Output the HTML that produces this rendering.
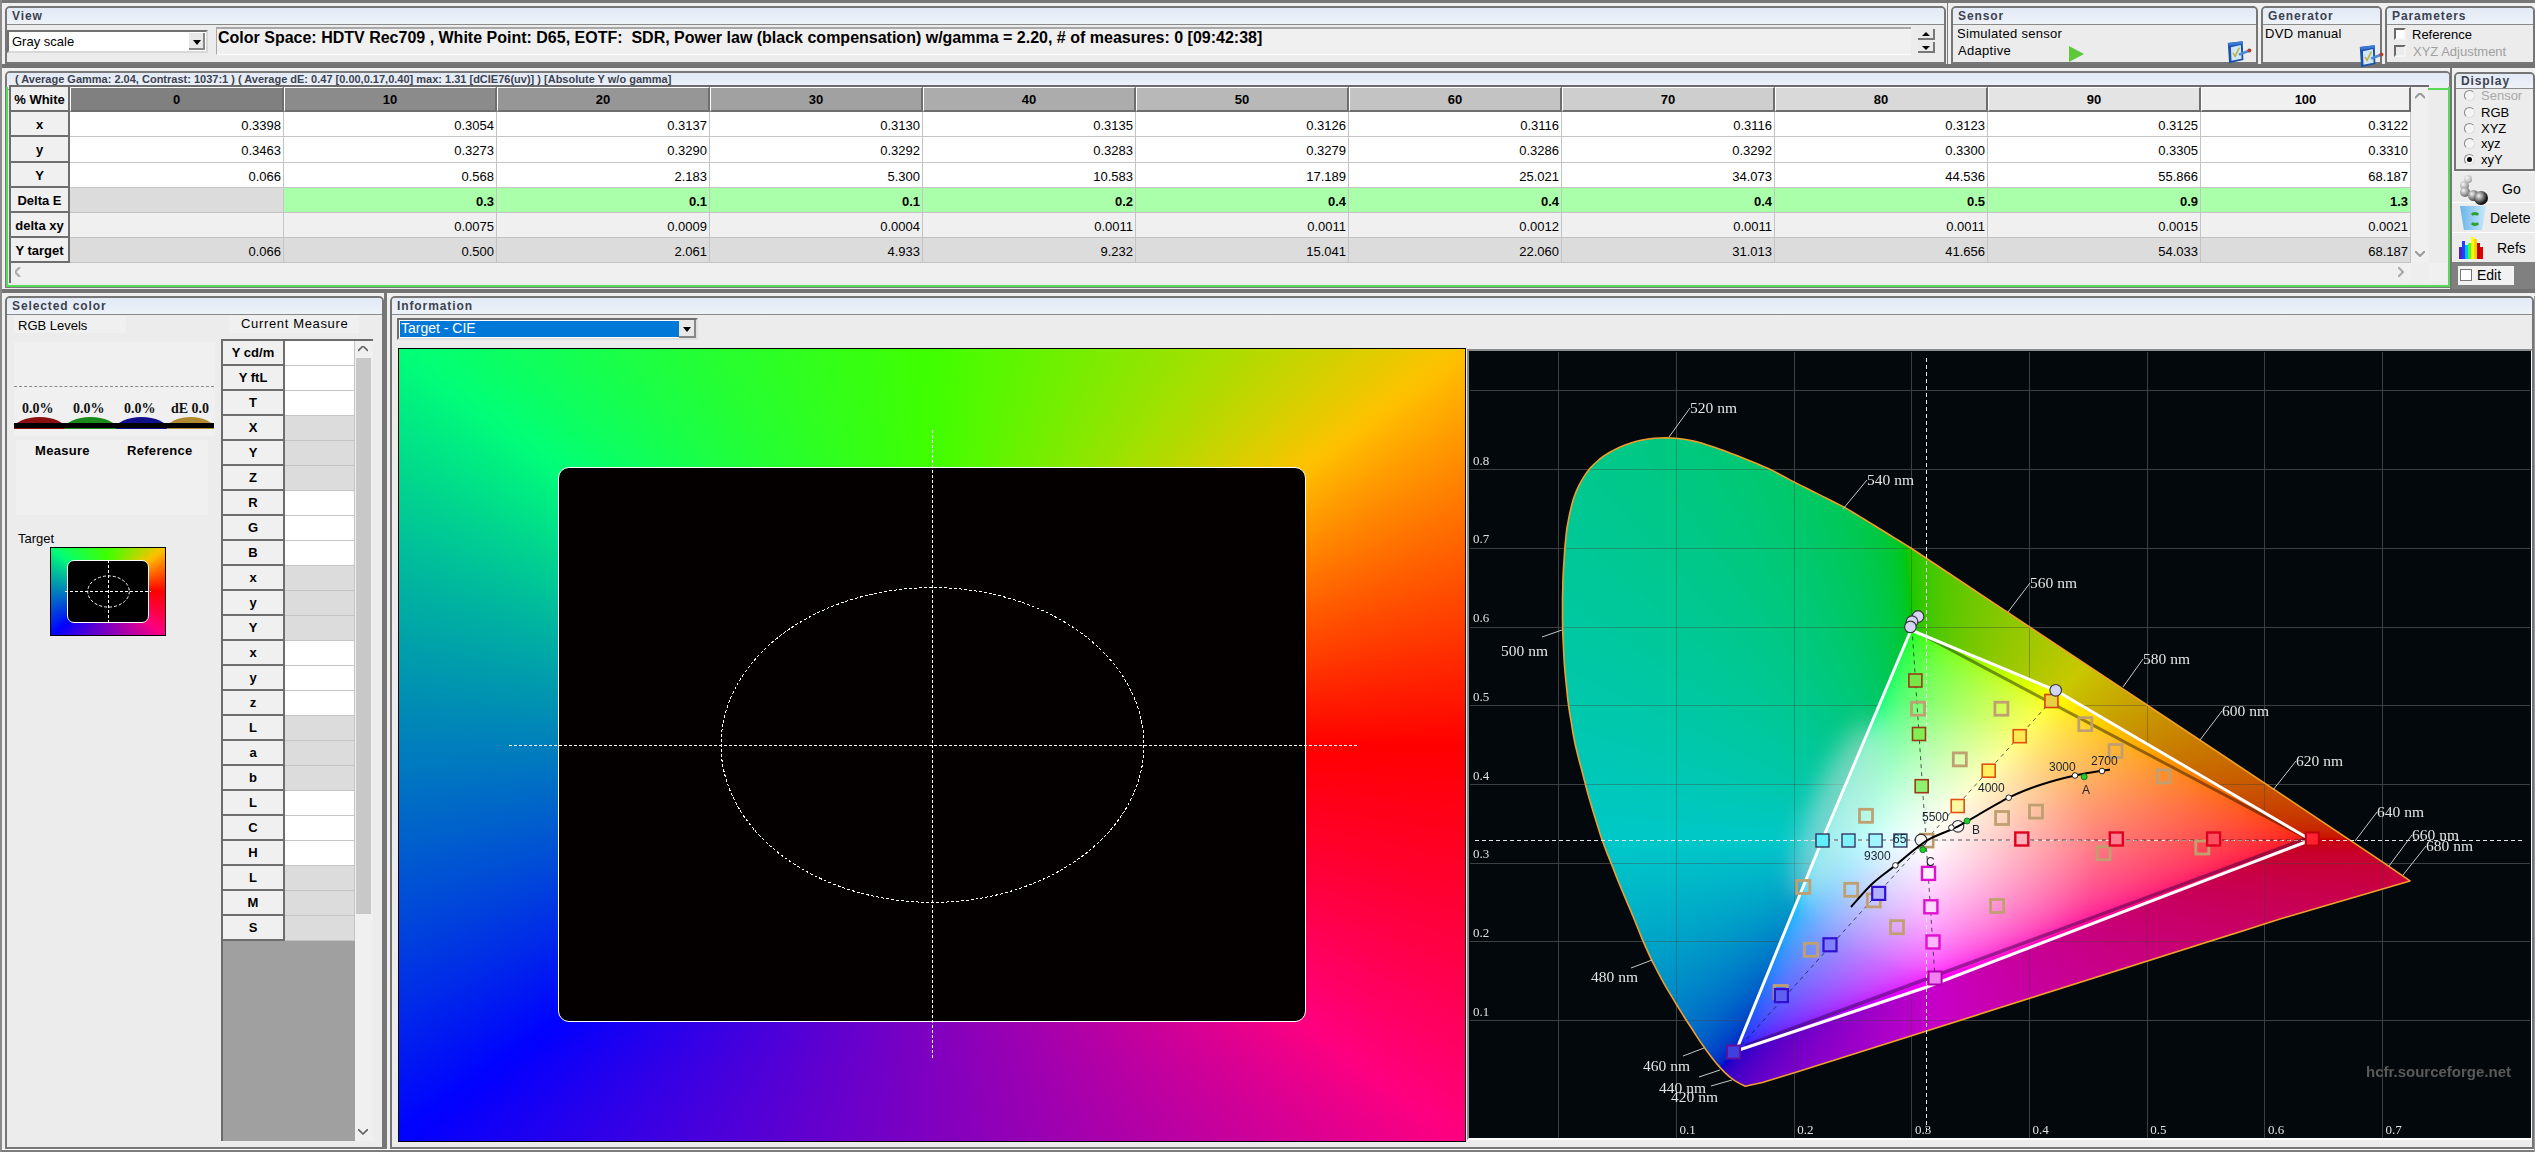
<!DOCTYPE html><html><head><meta charset="utf-8"><style>
*{box-sizing:border-box;margin:0;padding:0}
html,body{width:2535px;height:1152px;overflow:hidden;background:#f0f0f0;font-family:"Liberation Sans", sans-serif;color:#000}
.ab{position:absolute}
.pnl{position:absolute;border:2px solid #767676;border-radius:5px 5px 0 0;background:#ececec;overflow:hidden}
.ttl{position:absolute;left:0;right:0;top:0;height:17px;background:linear-gradient(#e2eaf6,#eef2f9);border-bottom:1px solid #8a8a8a;font-weight:bold;font-size:12px;color:#3c4250;padding-left:5px;line-height:16px;letter-spacing:0.9px}
.t{position:absolute;white-space:nowrap}
</style></head><body>

<div class="ab" style="left:0;top:0;width:2535px;height:3px;background:#767676"></div>
<div class="ab" style="left:0;top:0;width:2px;height:1152px;background:#8a8a8a"></div>
<div class="ab" style="left:2px;top:64px;width:2533px;height:4px;background:#737373"></div>
<div class="ab" style="left:2px;top:289px;width:2533px;height:4px;background:#737373"></div>
<div class="pnl" style="left:5px;top:6px;width:1941px;height:58px;"><div class="ttl">View</div>
<div class="ab" style="left:0px;top:22px;width:201px;height:23px;border:2px solid #707070;border-bottom-color:#d8d8d8;border-right-color:#d8d8d8;background:#fff"></div>
<div class="t" style="left:5px;top:26px;font-size:13px">Gray scale</div>
<div class="ab" style="left:182px;top:25px;width:16px;height:17px;background:#e8e8e8;border-right:2px solid #888;border-bottom:2px solid #888"></div>
<div class="ab" style="left:186px;top:32px;width:0;height:0;border-left:4px solid transparent;border-right:4px solid transparent;border-top:5px solid #000"></div>
<div class="ab" style="left:209px;top:19px;width:1695px;height:28px;border-top:2px solid #a8a8a8;border-left:1px solid #a8a8a8;border-bottom:1px solid #fff;background:#f0f0f0"></div>
<div class="t" style="left:211px;top:21px;font-size:16px;font-weight:bold;letter-spacing:0px;color:#000" id="cs">Color Space: HDTV Rec709 , White Point: D65, EOTF:&nbsp; SDR, Power law (black compensation) w/gamma = 2.20, # of measures: 0 [09:42:38]</div>
<div class="ab" style="left:1911px;top:21px;width:17px;height:11px;background:#eaeaea;border-right:2px solid #777;border-bottom:2px solid #777"></div>
<div class="ab" style="left:1915px;top:24px;width:0;height:0;border-left:4px solid transparent;border-right:4px solid transparent;border-bottom:4px solid #000"></div>
<div class="ab" style="left:1911px;top:34px;width:17px;height:11px;background:#eaeaea;border-right:2px solid #777;border-bottom:2px solid #777"></div>
<div class="ab" style="left:1915px;top:38px;width:0;height:0;border-left:4px solid transparent;border-right:4px solid transparent;border-top:4px solid #000"></div>
</div>
<div class="pnl" style="left:1951px;top:6px;width:307px;height:58px;"><div class="ttl">Sensor</div>
<div class="t" style="left:4px;top:18px;font-size:13px;letter-spacing:0.3px">Simulated sensor</div>
<div class="t" style="left:5px;top:35px;font-size:13px;letter-spacing:0.3px">Adaptive</div>
<div class="ab" style="left:116px;top:38px;width:0;height:0;border-top:8px solid transparent;border-bottom:8px solid transparent;border-left:15px solid #5cc83a"></div>
</div>
<div class="pnl" style="left:2261px;top:6px;width:121px;height:58px;"><div class="ttl">Generator</div>
<div class="t" style="left:2px;top:18px;font-size:13px;letter-spacing:0.3px">DVD manual</div>
</div>
<div class="pnl" style="left:2385px;top:6px;width:150px;height:58px;"><div class="ttl">Parameters</div>
<div class="ab" style="left:7px;top:20px;width:12px;height:12px;border:2px solid #6a6a6a;border-right-color:#f4f4f4;border-bottom-color:#f4f4f4;background:#fff"></div>
<div class="t" style="left:25px;top:19px;font-size:13px">Reference</div>
<div class="ab" style="left:7px;top:37px;width:12px;height:12px;border:2px solid #6a6a6a;border-right-color:#f4f4f4;border-bottom-color:#f4f4f4;background:#ececec"></div>
<div class="t" style="left:26px;top:36px;font-size:13px;color:#a0a0a0">XYZ Adjustment</div>
</div>
<div class="pnl" style="left:5px;top:71px;width:2446px;height:217px;border-color:#7a7a7a;"><div class="ttl"></div>
</div>
<div class="ab" style="left:6px;top:87px;width:2444px;height:200px;border:2px solid #58d858;border-top:none"></div>
<div class="t" style="left:15px;top:73px;font-size:11px;font-weight:bold;color:#3c4250;letter-spacing:0px" id="stat">( Average Gamma: 2.04, Contrast: 1037:1 ) ( Average dE: 0.47 [0.00,0.17,0.40] max: 1.31 [dCIE76(uv)] ) [Absolute Y w/o gamma]</div>
<div class="ab" style="left:9px;top:85px;width:2420px;height:198px;background:#eeeeee;border-top:2px solid #6c6c6c;border-left:2px solid #6c6c6c"></div>
<div class="ab" style="left:11px;top:87px;width:59px;height:25px;background:#f0f0f0;border-bottom:2px solid #6e6e6e;border-right:2px solid #6e6e6e;font-weight:bold;font-size:13px;text-align:center;line-height:25px">% White</div>
<div class="ab" style="left:11px;top:112px;width:59px;height:25px;background:#f0f0f0;border-bottom:2px solid #6e6e6e;border-right:2px solid #6e6e6e;font-weight:bold;font-size:13px;text-align:center;line-height:25px">x</div>
<div class="ab" style="left:11px;top:137px;width:59px;height:26px;background:#f0f0f0;border-bottom:2px solid #6e6e6e;border-right:2px solid #6e6e6e;font-weight:bold;font-size:13px;text-align:center;line-height:26px">y</div>
<div class="ab" style="left:11px;top:163px;width:59px;height:25px;background:#f0f0f0;border-bottom:2px solid #6e6e6e;border-right:2px solid #6e6e6e;font-weight:bold;font-size:13px;text-align:center;line-height:25px">Y</div>
<div class="ab" style="left:11px;top:188px;width:59px;height:25px;background:#f0f0f0;border-bottom:2px solid #6e6e6e;border-right:2px solid #6e6e6e;font-weight:bold;font-size:13px;text-align:center;line-height:25px">Delta E</div>
<div class="ab" style="left:11px;top:213px;width:59px;height:25px;background:#f0f0f0;border-bottom:2px solid #6e6e6e;border-right:2px solid #6e6e6e;font-weight:bold;font-size:13px;text-align:center;line-height:25px">delta xy</div>
<div class="ab" style="left:11px;top:238px;width:59px;height:25px;background:#f0f0f0;border-bottom:2px solid #6e6e6e;border-right:2px solid #6e6e6e;font-weight:bold;font-size:13px;text-align:center;line-height:25px">Y target</div>
<div class="ab" style="left:70px;top:87px;width:214px;height:25px;background:rgb(128,128,128);border-left:1px solid #fff;border-top:1px solid #fff;border-right:2px solid #6e6e6e;border-bottom:2px solid #6e6e6e;font-weight:bold;font-size:13px;text-align:center;line-height:24px">0</div>
<div class="ab" style="left:284px;top:87px;width:213px;height:25px;background:rgb(139,139,139);border-left:1px solid #fff;border-top:1px solid #fff;border-right:2px solid #6e6e6e;border-bottom:2px solid #6e6e6e;font-weight:bold;font-size:13px;text-align:center;line-height:24px">10</div>
<div class="ab" style="left:497px;top:87px;width:213px;height:25px;background:rgb(150,150,150);border-left:1px solid #fff;border-top:1px solid #fff;border-right:2px solid #6e6e6e;border-bottom:2px solid #6e6e6e;font-weight:bold;font-size:13px;text-align:center;line-height:24px">20</div>
<div class="ab" style="left:710px;top:87px;width:213px;height:25px;background:rgb(161,161,161);border-left:1px solid #fff;border-top:1px solid #fff;border-right:2px solid #6e6e6e;border-bottom:2px solid #6e6e6e;font-weight:bold;font-size:13px;text-align:center;line-height:24px">30</div>
<div class="ab" style="left:923px;top:87px;width:213px;height:25px;background:rgb(172,172,172);border-left:1px solid #fff;border-top:1px solid #fff;border-right:2px solid #6e6e6e;border-bottom:2px solid #6e6e6e;font-weight:bold;font-size:13px;text-align:center;line-height:24px">40</div>
<div class="ab" style="left:1136px;top:87px;width:213px;height:25px;background:rgb(184,184,184);border-left:1px solid #fff;border-top:1px solid #fff;border-right:2px solid #6e6e6e;border-bottom:2px solid #6e6e6e;font-weight:bold;font-size:13px;text-align:center;line-height:24px">50</div>
<div class="ab" style="left:1349px;top:87px;width:213px;height:25px;background:rgb(195,195,195);border-left:1px solid #fff;border-top:1px solid #fff;border-right:2px solid #6e6e6e;border-bottom:2px solid #6e6e6e;font-weight:bold;font-size:13px;text-align:center;line-height:24px">60</div>
<div class="ab" style="left:1562px;top:87px;width:213px;height:25px;background:rgb(206,206,206);border-left:1px solid #fff;border-top:1px solid #fff;border-right:2px solid #6e6e6e;border-bottom:2px solid #6e6e6e;font-weight:bold;font-size:13px;text-align:center;line-height:24px">70</div>
<div class="ab" style="left:1775px;top:87px;width:213px;height:25px;background:rgb(217,217,217);border-left:1px solid #fff;border-top:1px solid #fff;border-right:2px solid #6e6e6e;border-bottom:2px solid #6e6e6e;font-weight:bold;font-size:13px;text-align:center;line-height:24px">80</div>
<div class="ab" style="left:1988px;top:87px;width:213px;height:25px;background:rgb(228,228,228);border-left:1px solid #fff;border-top:1px solid #fff;border-right:2px solid #6e6e6e;border-bottom:2px solid #6e6e6e;font-weight:bold;font-size:13px;text-align:center;line-height:24px">90</div>
<div class="ab" style="left:2201px;top:87px;width:210px;height:25px;background:rgb(240,240,240);border-left:1px solid #fff;border-top:1px solid #fff;border-right:2px solid #6e6e6e;border-bottom:2px solid #6e6e6e;font-weight:bold;font-size:13px;text-align:center;line-height:24px">100</div>
<div class="ab" style="left:70px;top:112px;width:214px;height:25px;background:#ffffff;border-right:1px solid #c4c4c4;border-bottom:1px solid #c4c4c4;font-size:13px;font-weight:normal;text-align:right;padding-right:2px;line-height:27px">0.3398</div>
<div class="ab" style="left:284px;top:112px;width:213px;height:25px;background:#ffffff;border-right:1px solid #c4c4c4;border-bottom:1px solid #c4c4c4;font-size:13px;font-weight:normal;text-align:right;padding-right:2px;line-height:27px">0.3054</div>
<div class="ab" style="left:497px;top:112px;width:213px;height:25px;background:#ffffff;border-right:1px solid #c4c4c4;border-bottom:1px solid #c4c4c4;font-size:13px;font-weight:normal;text-align:right;padding-right:2px;line-height:27px">0.3137</div>
<div class="ab" style="left:710px;top:112px;width:213px;height:25px;background:#ffffff;border-right:1px solid #c4c4c4;border-bottom:1px solid #c4c4c4;font-size:13px;font-weight:normal;text-align:right;padding-right:2px;line-height:27px">0.3130</div>
<div class="ab" style="left:923px;top:112px;width:213px;height:25px;background:#ffffff;border-right:1px solid #c4c4c4;border-bottom:1px solid #c4c4c4;font-size:13px;font-weight:normal;text-align:right;padding-right:2px;line-height:27px">0.3135</div>
<div class="ab" style="left:1136px;top:112px;width:213px;height:25px;background:#ffffff;border-right:1px solid #c4c4c4;border-bottom:1px solid #c4c4c4;font-size:13px;font-weight:normal;text-align:right;padding-right:2px;line-height:27px">0.3126</div>
<div class="ab" style="left:1349px;top:112px;width:213px;height:25px;background:#ffffff;border-right:1px solid #c4c4c4;border-bottom:1px solid #c4c4c4;font-size:13px;font-weight:normal;text-align:right;padding-right:2px;line-height:27px">0.3116</div>
<div class="ab" style="left:1562px;top:112px;width:213px;height:25px;background:#ffffff;border-right:1px solid #c4c4c4;border-bottom:1px solid #c4c4c4;font-size:13px;font-weight:normal;text-align:right;padding-right:2px;line-height:27px">0.3116</div>
<div class="ab" style="left:1775px;top:112px;width:213px;height:25px;background:#ffffff;border-right:1px solid #c4c4c4;border-bottom:1px solid #c4c4c4;font-size:13px;font-weight:normal;text-align:right;padding-right:2px;line-height:27px">0.3123</div>
<div class="ab" style="left:1988px;top:112px;width:213px;height:25px;background:#ffffff;border-right:1px solid #c4c4c4;border-bottom:1px solid #c4c4c4;font-size:13px;font-weight:normal;text-align:right;padding-right:2px;line-height:27px">0.3125</div>
<div class="ab" style="left:2201px;top:112px;width:210px;height:25px;background:#ffffff;border-right:1px solid #c4c4c4;border-bottom:1px solid #c4c4c4;font-size:13px;font-weight:normal;text-align:right;padding-right:2px;line-height:27px">0.3122</div>
<div class="ab" style="left:70px;top:137px;width:214px;height:26px;background:#ffffff;border-right:1px solid #c4c4c4;border-bottom:1px solid #c4c4c4;font-size:13px;font-weight:normal;text-align:right;padding-right:2px;line-height:28px">0.3463</div>
<div class="ab" style="left:284px;top:137px;width:213px;height:26px;background:#ffffff;border-right:1px solid #c4c4c4;border-bottom:1px solid #c4c4c4;font-size:13px;font-weight:normal;text-align:right;padding-right:2px;line-height:28px">0.3273</div>
<div class="ab" style="left:497px;top:137px;width:213px;height:26px;background:#ffffff;border-right:1px solid #c4c4c4;border-bottom:1px solid #c4c4c4;font-size:13px;font-weight:normal;text-align:right;padding-right:2px;line-height:28px">0.3290</div>
<div class="ab" style="left:710px;top:137px;width:213px;height:26px;background:#ffffff;border-right:1px solid #c4c4c4;border-bottom:1px solid #c4c4c4;font-size:13px;font-weight:normal;text-align:right;padding-right:2px;line-height:28px">0.3292</div>
<div class="ab" style="left:923px;top:137px;width:213px;height:26px;background:#ffffff;border-right:1px solid #c4c4c4;border-bottom:1px solid #c4c4c4;font-size:13px;font-weight:normal;text-align:right;padding-right:2px;line-height:28px">0.3283</div>
<div class="ab" style="left:1136px;top:137px;width:213px;height:26px;background:#ffffff;border-right:1px solid #c4c4c4;border-bottom:1px solid #c4c4c4;font-size:13px;font-weight:normal;text-align:right;padding-right:2px;line-height:28px">0.3279</div>
<div class="ab" style="left:1349px;top:137px;width:213px;height:26px;background:#ffffff;border-right:1px solid #c4c4c4;border-bottom:1px solid #c4c4c4;font-size:13px;font-weight:normal;text-align:right;padding-right:2px;line-height:28px">0.3286</div>
<div class="ab" style="left:1562px;top:137px;width:213px;height:26px;background:#ffffff;border-right:1px solid #c4c4c4;border-bottom:1px solid #c4c4c4;font-size:13px;font-weight:normal;text-align:right;padding-right:2px;line-height:28px">0.3292</div>
<div class="ab" style="left:1775px;top:137px;width:213px;height:26px;background:#ffffff;border-right:1px solid #c4c4c4;border-bottom:1px solid #c4c4c4;font-size:13px;font-weight:normal;text-align:right;padding-right:2px;line-height:28px">0.3300</div>
<div class="ab" style="left:1988px;top:137px;width:213px;height:26px;background:#ffffff;border-right:1px solid #c4c4c4;border-bottom:1px solid #c4c4c4;font-size:13px;font-weight:normal;text-align:right;padding-right:2px;line-height:28px">0.3305</div>
<div class="ab" style="left:2201px;top:137px;width:210px;height:26px;background:#ffffff;border-right:1px solid #c4c4c4;border-bottom:1px solid #c4c4c4;font-size:13px;font-weight:normal;text-align:right;padding-right:2px;line-height:28px">0.3310</div>
<div class="ab" style="left:70px;top:163px;width:214px;height:25px;background:#ffffff;border-right:1px solid #c4c4c4;border-bottom:1px solid #c4c4c4;font-size:13px;font-weight:normal;text-align:right;padding-right:2px;line-height:27px">0.066</div>
<div class="ab" style="left:284px;top:163px;width:213px;height:25px;background:#ffffff;border-right:1px solid #c4c4c4;border-bottom:1px solid #c4c4c4;font-size:13px;font-weight:normal;text-align:right;padding-right:2px;line-height:27px">0.568</div>
<div class="ab" style="left:497px;top:163px;width:213px;height:25px;background:#ffffff;border-right:1px solid #c4c4c4;border-bottom:1px solid #c4c4c4;font-size:13px;font-weight:normal;text-align:right;padding-right:2px;line-height:27px">2.183</div>
<div class="ab" style="left:710px;top:163px;width:213px;height:25px;background:#ffffff;border-right:1px solid #c4c4c4;border-bottom:1px solid #c4c4c4;font-size:13px;font-weight:normal;text-align:right;padding-right:2px;line-height:27px">5.300</div>
<div class="ab" style="left:923px;top:163px;width:213px;height:25px;background:#ffffff;border-right:1px solid #c4c4c4;border-bottom:1px solid #c4c4c4;font-size:13px;font-weight:normal;text-align:right;padding-right:2px;line-height:27px">10.583</div>
<div class="ab" style="left:1136px;top:163px;width:213px;height:25px;background:#ffffff;border-right:1px solid #c4c4c4;border-bottom:1px solid #c4c4c4;font-size:13px;font-weight:normal;text-align:right;padding-right:2px;line-height:27px">17.189</div>
<div class="ab" style="left:1349px;top:163px;width:213px;height:25px;background:#ffffff;border-right:1px solid #c4c4c4;border-bottom:1px solid #c4c4c4;font-size:13px;font-weight:normal;text-align:right;padding-right:2px;line-height:27px">25.021</div>
<div class="ab" style="left:1562px;top:163px;width:213px;height:25px;background:#ffffff;border-right:1px solid #c4c4c4;border-bottom:1px solid #c4c4c4;font-size:13px;font-weight:normal;text-align:right;padding-right:2px;line-height:27px">34.073</div>
<div class="ab" style="left:1775px;top:163px;width:213px;height:25px;background:#ffffff;border-right:1px solid #c4c4c4;border-bottom:1px solid #c4c4c4;font-size:13px;font-weight:normal;text-align:right;padding-right:2px;line-height:27px">44.536</div>
<div class="ab" style="left:1988px;top:163px;width:213px;height:25px;background:#ffffff;border-right:1px solid #c4c4c4;border-bottom:1px solid #c4c4c4;font-size:13px;font-weight:normal;text-align:right;padding-right:2px;line-height:27px">55.866</div>
<div class="ab" style="left:2201px;top:163px;width:210px;height:25px;background:#ffffff;border-right:1px solid #c4c4c4;border-bottom:1px solid #c4c4c4;font-size:13px;font-weight:normal;text-align:right;padding-right:2px;line-height:27px">68.187</div>
<div class="ab" style="left:70px;top:188px;width:214px;height:25px;background:#dcdcdc;border-right:1px solid #c4c4c4;border-bottom:1px solid #c4c4c4;font-size:13px;font-weight:bold;text-align:right;padding-right:2px;line-height:27px"></div>
<div class="ab" style="left:284px;top:188px;width:213px;height:25px;background:#aaffaa;border-right:1px solid #c4c4c4;border-bottom:1px solid #c4c4c4;font-size:13px;font-weight:bold;text-align:right;padding-right:2px;line-height:27px">0.3</div>
<div class="ab" style="left:497px;top:188px;width:213px;height:25px;background:#aaffaa;border-right:1px solid #c4c4c4;border-bottom:1px solid #c4c4c4;font-size:13px;font-weight:bold;text-align:right;padding-right:2px;line-height:27px">0.1</div>
<div class="ab" style="left:710px;top:188px;width:213px;height:25px;background:#aaffaa;border-right:1px solid #c4c4c4;border-bottom:1px solid #c4c4c4;font-size:13px;font-weight:bold;text-align:right;padding-right:2px;line-height:27px">0.1</div>
<div class="ab" style="left:923px;top:188px;width:213px;height:25px;background:#aaffaa;border-right:1px solid #c4c4c4;border-bottom:1px solid #c4c4c4;font-size:13px;font-weight:bold;text-align:right;padding-right:2px;line-height:27px">0.2</div>
<div class="ab" style="left:1136px;top:188px;width:213px;height:25px;background:#aaffaa;border-right:1px solid #c4c4c4;border-bottom:1px solid #c4c4c4;font-size:13px;font-weight:bold;text-align:right;padding-right:2px;line-height:27px">0.4</div>
<div class="ab" style="left:1349px;top:188px;width:213px;height:25px;background:#aaffaa;border-right:1px solid #c4c4c4;border-bottom:1px solid #c4c4c4;font-size:13px;font-weight:bold;text-align:right;padding-right:2px;line-height:27px">0.4</div>
<div class="ab" style="left:1562px;top:188px;width:213px;height:25px;background:#aaffaa;border-right:1px solid #c4c4c4;border-bottom:1px solid #c4c4c4;font-size:13px;font-weight:bold;text-align:right;padding-right:2px;line-height:27px">0.4</div>
<div class="ab" style="left:1775px;top:188px;width:213px;height:25px;background:#aaffaa;border-right:1px solid #c4c4c4;border-bottom:1px solid #c4c4c4;font-size:13px;font-weight:bold;text-align:right;padding-right:2px;line-height:27px">0.5</div>
<div class="ab" style="left:1988px;top:188px;width:213px;height:25px;background:#aaffaa;border-right:1px solid #c4c4c4;border-bottom:1px solid #c4c4c4;font-size:13px;font-weight:bold;text-align:right;padding-right:2px;line-height:27px">0.9</div>
<div class="ab" style="left:2201px;top:188px;width:210px;height:25px;background:#aaffaa;border-right:1px solid #c4c4c4;border-bottom:1px solid #c4c4c4;font-size:13px;font-weight:bold;text-align:right;padding-right:2px;line-height:27px">1.3</div>
<div class="ab" style="left:70px;top:213px;width:214px;height:25px;background:#f0f0f0;border-right:1px solid #c4c4c4;border-bottom:1px solid #c4c4c4;font-size:13px;font-weight:normal;text-align:right;padding-right:2px;line-height:27px"></div>
<div class="ab" style="left:284px;top:213px;width:213px;height:25px;background:#f0f0f0;border-right:1px solid #c4c4c4;border-bottom:1px solid #c4c4c4;font-size:13px;font-weight:normal;text-align:right;padding-right:2px;line-height:27px">0.0075</div>
<div class="ab" style="left:497px;top:213px;width:213px;height:25px;background:#f0f0f0;border-right:1px solid #c4c4c4;border-bottom:1px solid #c4c4c4;font-size:13px;font-weight:normal;text-align:right;padding-right:2px;line-height:27px">0.0009</div>
<div class="ab" style="left:710px;top:213px;width:213px;height:25px;background:#f0f0f0;border-right:1px solid #c4c4c4;border-bottom:1px solid #c4c4c4;font-size:13px;font-weight:normal;text-align:right;padding-right:2px;line-height:27px">0.0004</div>
<div class="ab" style="left:923px;top:213px;width:213px;height:25px;background:#f0f0f0;border-right:1px solid #c4c4c4;border-bottom:1px solid #c4c4c4;font-size:13px;font-weight:normal;text-align:right;padding-right:2px;line-height:27px">0.0011</div>
<div class="ab" style="left:1136px;top:213px;width:213px;height:25px;background:#f0f0f0;border-right:1px solid #c4c4c4;border-bottom:1px solid #c4c4c4;font-size:13px;font-weight:normal;text-align:right;padding-right:2px;line-height:27px">0.0011</div>
<div class="ab" style="left:1349px;top:213px;width:213px;height:25px;background:#f0f0f0;border-right:1px solid #c4c4c4;border-bottom:1px solid #c4c4c4;font-size:13px;font-weight:normal;text-align:right;padding-right:2px;line-height:27px">0.0012</div>
<div class="ab" style="left:1562px;top:213px;width:213px;height:25px;background:#f0f0f0;border-right:1px solid #c4c4c4;border-bottom:1px solid #c4c4c4;font-size:13px;font-weight:normal;text-align:right;padding-right:2px;line-height:27px">0.0011</div>
<div class="ab" style="left:1775px;top:213px;width:213px;height:25px;background:#f0f0f0;border-right:1px solid #c4c4c4;border-bottom:1px solid #c4c4c4;font-size:13px;font-weight:normal;text-align:right;padding-right:2px;line-height:27px">0.0011</div>
<div class="ab" style="left:1988px;top:213px;width:213px;height:25px;background:#f0f0f0;border-right:1px solid #c4c4c4;border-bottom:1px solid #c4c4c4;font-size:13px;font-weight:normal;text-align:right;padding-right:2px;line-height:27px">0.0015</div>
<div class="ab" style="left:2201px;top:213px;width:210px;height:25px;background:#f0f0f0;border-right:1px solid #c4c4c4;border-bottom:1px solid #c4c4c4;font-size:13px;font-weight:normal;text-align:right;padding-right:2px;line-height:27px">0.0021</div>
<div class="ab" style="left:70px;top:238px;width:214px;height:25px;background:#dcdcdc;border-right:1px solid #c4c4c4;border-bottom:1px solid #c4c4c4;font-size:13px;font-weight:normal;text-align:right;padding-right:2px;line-height:27px">0.066</div>
<div class="ab" style="left:284px;top:238px;width:213px;height:25px;background:#dcdcdc;border-right:1px solid #c4c4c4;border-bottom:1px solid #c4c4c4;font-size:13px;font-weight:normal;text-align:right;padding-right:2px;line-height:27px">0.500</div>
<div class="ab" style="left:497px;top:238px;width:213px;height:25px;background:#dcdcdc;border-right:1px solid #c4c4c4;border-bottom:1px solid #c4c4c4;font-size:13px;font-weight:normal;text-align:right;padding-right:2px;line-height:27px">2.061</div>
<div class="ab" style="left:710px;top:238px;width:213px;height:25px;background:#dcdcdc;border-right:1px solid #c4c4c4;border-bottom:1px solid #c4c4c4;font-size:13px;font-weight:normal;text-align:right;padding-right:2px;line-height:27px">4.933</div>
<div class="ab" style="left:923px;top:238px;width:213px;height:25px;background:#dcdcdc;border-right:1px solid #c4c4c4;border-bottom:1px solid #c4c4c4;font-size:13px;font-weight:normal;text-align:right;padding-right:2px;line-height:27px">9.232</div>
<div class="ab" style="left:1136px;top:238px;width:213px;height:25px;background:#dcdcdc;border-right:1px solid #c4c4c4;border-bottom:1px solid #c4c4c4;font-size:13px;font-weight:normal;text-align:right;padding-right:2px;line-height:27px">15.041</div>
<div class="ab" style="left:1349px;top:238px;width:213px;height:25px;background:#dcdcdc;border-right:1px solid #c4c4c4;border-bottom:1px solid #c4c4c4;font-size:13px;font-weight:normal;text-align:right;padding-right:2px;line-height:27px">22.060</div>
<div class="ab" style="left:1562px;top:238px;width:213px;height:25px;background:#dcdcdc;border-right:1px solid #c4c4c4;border-bottom:1px solid #c4c4c4;font-size:13px;font-weight:normal;text-align:right;padding-right:2px;line-height:27px">31.013</div>
<div class="ab" style="left:1775px;top:238px;width:213px;height:25px;background:#dcdcdc;border-right:1px solid #c4c4c4;border-bottom:1px solid #c4c4c4;font-size:13px;font-weight:normal;text-align:right;padding-right:2px;line-height:27px">41.656</div>
<div class="ab" style="left:1988px;top:238px;width:213px;height:25px;background:#dcdcdc;border-right:1px solid #c4c4c4;border-bottom:1px solid #c4c4c4;font-size:13px;font-weight:normal;text-align:right;padding-right:2px;line-height:27px">54.033</div>
<div class="ab" style="left:2201px;top:238px;width:210px;height:25px;background:#dcdcdc;border-right:1px solid #c4c4c4;border-bottom:1px solid #c4c4c4;font-size:13px;font-weight:normal;text-align:right;padding-right:2px;line-height:27px">68.187</div>
<div class="ab" style="left:2411px;top:87px;width:18px;height:176px;background:#f0f0f0"></div>
<div class="ab" style="left:11px;top:263px;width:2400px;height:19px;background:#f0f0f0"></div>
<div class="ab" style="left:2429px;top:263px;width:18px;height:19px;background:#f0f0f0"></div>
<div class="ab" style="left:2450px;top:68px;width:2px;height:221px;background:#777"></div>
<div class="pnl" style="left:2454px;top:72px;width:81px;height:99px;"><div class="ttl" style="height:15px;line-height:14px">Display</div>
<div class="ab" style="left:8px;top:16px;width:11px;height:11px;border-radius:50%;border:1px solid #888;border-right-color:#ddd;border-bottom-color:#ddd;background:#f4f4f4"></div>
<div class="t" style="left:25px;top:14px;font-size:13px;color:#a8a8a8">Sensor</div>
<div class="ab" style="left:8px;top:33px;width:11px;height:11px;border-radius:50%;border:1px solid #888;border-right-color:#ddd;border-bottom-color:#ddd;background:#f4f4f4"></div>
<div class="t" style="left:25px;top:31px;font-size:13px;color:#000">RGB</div>
<div class="ab" style="left:8px;top:49px;width:11px;height:11px;border-radius:50%;border:1px solid #888;border-right-color:#ddd;border-bottom-color:#ddd;background:#f4f4f4"></div>
<div class="t" style="left:25px;top:47px;font-size:13px;color:#000">XYZ</div>
<div class="ab" style="left:8px;top:64px;width:11px;height:11px;border-radius:50%;border:1px solid #888;border-right-color:#ddd;border-bottom-color:#ddd;background:#f4f4f4"></div>
<div class="t" style="left:25px;top:62px;font-size:13px;color:#000">xyz</div>
<div class="ab" style="left:8px;top:80px;width:11px;height:11px;border-radius:50%;border:1px solid #888;border-right-color:#ddd;border-bottom-color:#ddd;background:#f4f4f4"></div>
<div class="ab" style="left:11px;top:83px;width:5px;height:5px;border-radius:50%;background:#000"></div>
<div class="t" style="left:25px;top:78px;font-size:13px;color:#000">xyY</div>
</div>
<div class="ab" style="left:2452px;top:173px;width:83px;height:89px;background:#ececec"></div>
<div class="ab" style="left:2452px;top:202px;width:83px;height:1px;background:#fff"></div>
<div class="ab" style="left:2452px;top:232px;width:83px;height:1px;background:#fff"></div>
<div class="t" style="left:2502px;top:181px;font-size:14px">Go</div>
<div class="t" style="left:2490px;top:210px;font-size:14px">Delete</div>
<div class="t" style="left:2497px;top:240px;font-size:14px">Refs</div>
<div class="ab" style="left:2464px;top:175px;width:8px;height:8px;border-radius:50%;background:radial-gradient(circle at 35% 35%,#f4f4f4 0%,#bbb 65%,#222 100%)"></div>
<div class="ab" style="left:2459.5px;top:180.5px;width:9.0px;height:9.0px;border-radius:50%;background:radial-gradient(circle at 35% 35%,#f4f4f4 0%,#999 65%,#222 100%)"></div>
<div class="ab" style="left:2460px;top:187px;width:10px;height:10px;border-radius:50%;background:radial-gradient(circle at 35% 35%,#f4f4f4 0%,#777 65%,#222 100%)"></div>
<div class="ab" style="left:2467.5px;top:189.5px;width:11.0px;height:11.0px;border-radius:50%;background:radial-gradient(circle at 35% 35%,#f4f4f4 0%,#555 65%,#222 100%)"></div>
<div class="ab" style="left:2474px;top:191px;width:14px;height:14px;border-radius:50%;background:radial-gradient(circle at 35% 35%,#f4f4f4 0%,#111 65%,#222 100%)"></div>
<div class="ab" style="left:2460px;top:206px;width:26px;height:24px;background:linear-gradient(90deg,#6ab4e8,#c8e8fb);clip-path:polygon(0 0,100% 0,85% 100%,15% 100%)"></div>
<div class="ab" style="left:2469px;top:212px;width:12px;height:14px;border-radius:50%;border:3px solid #2aa02a;border-left-color:transparent;border-right-color:transparent"></div>
<div class="ab" style="left:2459px;top:247px;width:3px;height:12px;background:#5020c0"></div>
<div class="ab" style="left:2462px;top:241px;width:3px;height:18px;background:#2040ff"></div>
<div class="ab" style="left:2465px;top:245px;width:3px;height:14px;background:#00c0ff"></div>
<div class="ab" style="left:2468px;top:243px;width:3px;height:16px;background:#40ff40"></div>
<div class="ab" style="left:2471px;top:237px;width:3px;height:22px;background:#ffff00"></div>
<div class="ab" style="left:2474px;top:239px;width:3px;height:20px;background:#ffd000"></div>
<div class="ab" style="left:2477px;top:243px;width:3px;height:16px;background:#c00000"></div>
<div class="ab" style="left:2480px;top:247px;width:3px;height:12px;background:#e00000"></div>
<div class="ab" style="left:2452px;top:262px;width:83px;height:27px;background:#808080"></div>
<div class="ab" style="left:2458px;top:266px;width:56px;height:19px;background:#f2f2f2"></div>
<div class="ab" style="left:2460px;top:269px;width:12px;height:12px;background:#fff;border:1px solid #777"></div>
<div class="t" style="left:2477px;top:267px;font-size:14px">Edit</div>
<div class="ab" style="left:384px;top:292px;width:3px;height:860px;background:#777"></div>
<div class="pnl" style="left:5px;top:296px;width:379px;height:853px;"><div class="ttl">Selected color</div>
<div class="ab" style="left:7px;top:18px;width:112px;height:17px;background:#f0f0f0"></div>
<div class="t" style="left:11px;top:20px;font-size:13px">RGB Levels</div>
<div class="ab" style="left:222px;top:18px;width:130px;height:17px;background:#f0f0f0"></div>
<div class="t" style="left:234px;top:18px;font-size:13px;letter-spacing:0.65px">Current Measure</div>
<div class="ab" style="left:7px;top:44px;width:201px;height:94px;background:#f0f0f0"></div>
<div class="ab" style="left:7px;top:88px;width:200px;height:0;border-top:1px dashed #8a8a8a"></div>
<div class="t" style="left:15px;top:103px;font-size:14px;font-family:'Liberation Serif',serif;font-weight:bold;color:#111">0.0%</div>
<div class="t" style="left:66px;top:103px;font-size:14px;font-family:'Liberation Serif',serif;font-weight:bold;color:#111">0.0%</div>
<div class="t" style="left:117px;top:103px;font-size:14px;font-family:'Liberation Serif',serif;font-weight:bold;color:#111">0.0%</div>
<div class="t" style="left:164px;top:103px;font-size:14px;font-family:'Liberation Serif',serif;font-weight:bold;color:#111">dE 0.0</div>
<div class="ab" style="left:7px;top:125px;width:200px;height:5px;background:#000"></div>
<div class="ab" style="left:7px;top:119px;width:51px;height:12px;background:#8a1010;border-radius:50% 50% 0 0/100% 100% 0 0"></div>
<div class="ab" style="left:58px;top:119px;width:51px;height:12px;background:#1a8a1a;border-radius:50% 50% 0 0/100% 100% 0 0"></div>
<div class="ab" style="left:109px;top:119px;width:51px;height:12px;background:#10108a;border-radius:50% 50% 0 0/100% 100% 0 0"></div>
<div class="ab" style="left:160px;top:119px;width:47px;height:12px;background:#b08a30;border-radius:50% 50% 0 0/100% 100% 0 0"></div>
<div class="ab" style="left:7px;top:125px;width:200px;height:5px;background:#000"></div>
<div class="ab" style="left:9px;top:142px;width:192px;height:75px;background:#f0f0f0"></div>
<div class="t" style="left:28px;top:145px;font-size:13px;font-weight:bold;letter-spacing:0.3px">Measure</div>
<div class="t" style="left:120px;top:145px;font-size:13px;font-weight:bold;letter-spacing:0.3px">Reference</div>
<div class="t" style="left:11px;top:233px;font-size:13px">Target</div>
<div class="ab" style="left:43px;top:249px;width:116px;height:89px;border:1px solid #000;background:conic-gradient(from 0deg at 57.0px 43.5px,rgb(64,255,0) 0.0deg,rgb(72,253,0) 3.0deg,rgb(79,250,0) 6.0deg,rgb(87,248,0) 9.0deg,rgb(95,245,0) 12.0deg,rgb(103,243,0) 15.0deg,rgb(111,240,0) 18.0deg,rgb(120,237,0) 21.0deg,rgb(129,234,0) 24.0deg,rgb(138,231,0) 27.0deg,rgb(148,228,0) 30.0deg,rgb(159,225,0) 33.0deg,rgb(170,221,0) 36.0deg,rgb(182,217,0) 39.0deg,rgb(195,213,0) 42.0deg,rgb(210,208,0) 45.0deg,rgb(226,203,0) 48.0deg,rgb(244,198,0) 51.0deg,rgb(255,185,0) 54.0deg,rgb(255,165,0) 57.0deg,rgb(255,147,0) 60.0deg,rgb(255,130,0) 63.0deg,rgb(255,113,0) 66.0deg,rgb(255,98,0) 69.0deg,rgb(255,83,0) 72.0deg,rgb(255,68,0) 75.0deg,rgb(255,54,0) 78.0deg,rgb(255,40,0) 81.0deg,rgb(255,27,0) 84.0deg,rgb(255,13,0) 87.0deg,rgb(255,0,0) 90.0deg,rgb(255,0,9) 93.0deg,rgb(255,0,18) 96.0deg,rgb(255,0,27) 99.0deg,rgb(255,0,36) 102.0deg,rgb(255,0,45) 105.0deg,rgb(255,0,54) 108.0deg,rgb(255,0,64) 111.0deg,rgb(255,0,75) 114.0deg,rgb(255,0,85) 117.0deg,rgb(255,0,97) 120.0deg,rgb(255,0,109) 123.0deg,rgb(255,0,122) 126.0deg,rgb(248,0,132) 129.0deg,rgb(236,0,138) 132.0deg,rgb(225,0,143) 135.0deg,rgb(215,0,148) 138.0deg,rgb(206,0,152) 141.0deg,rgb(198,0,156) 144.0deg,rgb(191,0,160) 147.0deg,rgb(184,0,164) 150.0deg,rgb(177,0,167) 153.0deg,rgb(171,0,170) 156.0deg,rgb(165,0,173) 159.0deg,rgb(159,0,176) 162.0deg,rgb(154,0,179) 165.0deg,rgb(148,0,181) 168.0deg,rgb(143,0,184) 171.0deg,rgb(138,0,186) 174.0deg,rgb(133,0,189) 177.0deg,rgb(128,0,192) 180.0deg,rgb(122,0,194) 183.0deg,rgb(117,0,197) 186.0deg,rgb(112,0,199) 189.0deg,rgb(107,0,202) 192.0deg,rgb(101,0,204) 195.0deg,rgb(96,0,207) 198.0deg,rgb(90,0,210) 201.0deg,rgb(84,0,213) 204.0deg,rgb(78,0,216) 207.0deg,rgb(71,0,219) 210.0deg,rgb(64,0,223) 213.0deg,rgb(57,0,227) 216.0deg,rgb(49,0,231) 219.0deg,rgb(40,0,235) 222.0deg,rgb(30,0,240) 225.0deg,rgb(19,0,245) 228.0deg,rgb(7,0,251) 231.0deg,rgb(0,6,252) 234.0deg,rgb(0,19,245) 237.0deg,rgb(0,31,239) 240.0deg,rgb(0,42,233) 243.0deg,rgb(0,53,227) 246.0deg,rgb(0,63,221) 249.0deg,rgb(0,73,216) 252.0deg,rgb(0,83,211) 255.0deg,rgb(0,92,206) 258.0deg,rgb(0,101,202) 261.0deg,rgb(0,110,197) 264.0deg,rgb(0,119,192) 267.0deg,rgb(0,127,188) 270.0deg,rgb(0,136,183) 273.0deg,rgb(0,145,178) 276.0deg,rgb(0,154,173) 279.0deg,rgb(0,163,169) 282.0deg,rgb(0,172,164) 285.0deg,rgb(0,182,159) 288.0deg,rgb(0,192,154) 291.0deg,rgb(0,202,148) 294.0deg,rgb(0,213,142) 297.0deg,rgb(0,224,136) 300.0deg,rgb(0,236,130) 303.0deg,rgb(0,249,123) 306.0deg,rgb(4,255,113) 309.0deg,rgb(10,255,102) 312.0deg,rgb(15,255,92) 315.0deg,rgb(20,255,82) 318.0deg,rgb(24,255,74) 321.0deg,rgb(29,255,67) 324.0deg,rgb(32,255,59) 327.0deg,rgb(36,255,53) 330.0deg,rgb(39,255,47) 333.0deg,rgb(42,255,41) 336.0deg,rgb(45,255,35) 339.0deg,rgb(48,255,30) 342.0deg,rgb(51,255,25) 345.0deg,rgb(54,255,19) 348.0deg,rgb(56,255,15) 351.0deg,rgb(59,255,10) 354.0deg,rgb(61,255,5) 357.0deg,rgb(64,255,0) 360.0deg)"></div>
<div class="ab" style="left:60px;top:262px;width:82px;height:63px;background:#000;border:1px solid #fff;border-radius:7px"></div>
<svg class="ab" style="left:43px;top:249px" width="116" height="89"><g stroke="#fff" stroke-width="1" fill="none" stroke-dasharray="3,2"><line x1="15" y1="44.5" x2="101" y2="44.5"/><line x1="58.5" y1="13" x2="58.5" y2="76"/><ellipse cx="58.5" cy="44.5" rx="20.8" ry="15.6"/></g></svg>
<div class="ab" style="left:214px;top:41px;width:152px;height:802px;background:#a0a0a0;border-left:2px solid #6c6c6c;border-top:2px solid #6c6c6c"></div>
<div class="ab" style="left:216px;top:43px;width:62px;height:25px;background:#f0f0f0;border-right:2px solid #6e6e6e;border-bottom:2px solid #6e6e6e;font-weight:bold;font-size:13px;text-align:center;line-height:23px">Y cd/m</div>
<div class="ab" style="left:278px;top:43px;width:70px;height:25px;background:#fff;border-bottom:1px solid #c4c4c4;border-right:1px solid #c4c4c4"></div>
<div class="ab" style="left:216px;top:68px;width:62px;height:25px;background:#f0f0f0;border-right:2px solid #6e6e6e;border-bottom:2px solid #6e6e6e;font-weight:bold;font-size:13px;text-align:center;line-height:23px">Y ftL</div>
<div class="ab" style="left:278px;top:68px;width:70px;height:25px;background:#fff;border-bottom:1px solid #c4c4c4;border-right:1px solid #c4c4c4"></div>
<div class="ab" style="left:216px;top:93px;width:62px;height:25px;background:#f0f0f0;border-right:2px solid #6e6e6e;border-bottom:2px solid #6e6e6e;font-weight:bold;font-size:13px;text-align:center;line-height:23px">T</div>
<div class="ab" style="left:278px;top:93px;width:70px;height:25px;background:#fff;border-bottom:1px solid #c4c4c4;border-right:1px solid #c4c4c4"></div>
<div class="ab" style="left:216px;top:118px;width:62px;height:25px;background:#f0f0f0;border-right:2px solid #6e6e6e;border-bottom:2px solid #6e6e6e;font-weight:bold;font-size:13px;text-align:center;line-height:23px">X</div>
<div class="ab" style="left:278px;top:118px;width:70px;height:25px;background:#dcdcdc;border-bottom:1px solid #c4c4c4;border-right:1px solid #c4c4c4"></div>
<div class="ab" style="left:216px;top:143px;width:62px;height:25px;background:#f0f0f0;border-right:2px solid #6e6e6e;border-bottom:2px solid #6e6e6e;font-weight:bold;font-size:13px;text-align:center;line-height:23px">Y</div>
<div class="ab" style="left:278px;top:143px;width:70px;height:25px;background:#dcdcdc;border-bottom:1px solid #c4c4c4;border-right:1px solid #c4c4c4"></div>
<div class="ab" style="left:216px;top:168px;width:62px;height:25px;background:#f0f0f0;border-right:2px solid #6e6e6e;border-bottom:2px solid #6e6e6e;font-weight:bold;font-size:13px;text-align:center;line-height:23px">Z</div>
<div class="ab" style="left:278px;top:168px;width:70px;height:25px;background:#dcdcdc;border-bottom:1px solid #c4c4c4;border-right:1px solid #c4c4c4"></div>
<div class="ab" style="left:216px;top:193px;width:62px;height:25px;background:#f0f0f0;border-right:2px solid #6e6e6e;border-bottom:2px solid #6e6e6e;font-weight:bold;font-size:13px;text-align:center;line-height:23px">R</div>
<div class="ab" style="left:278px;top:193px;width:70px;height:25px;background:#fff;border-bottom:1px solid #c4c4c4;border-right:1px solid #c4c4c4"></div>
<div class="ab" style="left:216px;top:218px;width:62px;height:25px;background:#f0f0f0;border-right:2px solid #6e6e6e;border-bottom:2px solid #6e6e6e;font-weight:bold;font-size:13px;text-align:center;line-height:23px">G</div>
<div class="ab" style="left:278px;top:218px;width:70px;height:25px;background:#fff;border-bottom:1px solid #c4c4c4;border-right:1px solid #c4c4c4"></div>
<div class="ab" style="left:216px;top:243px;width:62px;height:25px;background:#f0f0f0;border-right:2px solid #6e6e6e;border-bottom:2px solid #6e6e6e;font-weight:bold;font-size:13px;text-align:center;line-height:23px">B</div>
<div class="ab" style="left:278px;top:243px;width:70px;height:25px;background:#fff;border-bottom:1px solid #c4c4c4;border-right:1px solid #c4c4c4"></div>
<div class="ab" style="left:216px;top:268px;width:62px;height:25px;background:#f0f0f0;border-right:2px solid #6e6e6e;border-bottom:2px solid #6e6e6e;font-weight:bold;font-size:13px;text-align:center;line-height:23px">x</div>
<div class="ab" style="left:278px;top:268px;width:70px;height:25px;background:#dcdcdc;border-bottom:1px solid #c4c4c4;border-right:1px solid #c4c4c4"></div>
<div class="ab" style="left:216px;top:293px;width:62px;height:25px;background:#f0f0f0;border-right:2px solid #6e6e6e;border-bottom:2px solid #6e6e6e;font-weight:bold;font-size:13px;text-align:center;line-height:23px">y</div>
<div class="ab" style="left:278px;top:293px;width:70px;height:25px;background:#dcdcdc;border-bottom:1px solid #c4c4c4;border-right:1px solid #c4c4c4"></div>
<div class="ab" style="left:216px;top:318px;width:62px;height:25px;background:#f0f0f0;border-right:2px solid #6e6e6e;border-bottom:2px solid #6e6e6e;font-weight:bold;font-size:13px;text-align:center;line-height:23px">Y</div>
<div class="ab" style="left:278px;top:318px;width:70px;height:25px;background:#dcdcdc;border-bottom:1px solid #c4c4c4;border-right:1px solid #c4c4c4"></div>
<div class="ab" style="left:216px;top:343px;width:62px;height:25px;background:#f0f0f0;border-right:2px solid #6e6e6e;border-bottom:2px solid #6e6e6e;font-weight:bold;font-size:13px;text-align:center;line-height:23px">x</div>
<div class="ab" style="left:278px;top:343px;width:70px;height:25px;background:#fff;border-bottom:1px solid #c4c4c4;border-right:1px solid #c4c4c4"></div>
<div class="ab" style="left:216px;top:368px;width:62px;height:25px;background:#f0f0f0;border-right:2px solid #6e6e6e;border-bottom:2px solid #6e6e6e;font-weight:bold;font-size:13px;text-align:center;line-height:23px">y</div>
<div class="ab" style="left:278px;top:368px;width:70px;height:25px;background:#fff;border-bottom:1px solid #c4c4c4;border-right:1px solid #c4c4c4"></div>
<div class="ab" style="left:216px;top:393px;width:62px;height:25px;background:#f0f0f0;border-right:2px solid #6e6e6e;border-bottom:2px solid #6e6e6e;font-weight:bold;font-size:13px;text-align:center;line-height:23px">z</div>
<div class="ab" style="left:278px;top:393px;width:70px;height:25px;background:#fff;border-bottom:1px solid #c4c4c4;border-right:1px solid #c4c4c4"></div>
<div class="ab" style="left:216px;top:418px;width:62px;height:25px;background:#f0f0f0;border-right:2px solid #6e6e6e;border-bottom:2px solid #6e6e6e;font-weight:bold;font-size:13px;text-align:center;line-height:23px">L</div>
<div class="ab" style="left:278px;top:418px;width:70px;height:25px;background:#dcdcdc;border-bottom:1px solid #c4c4c4;border-right:1px solid #c4c4c4"></div>
<div class="ab" style="left:216px;top:443px;width:62px;height:25px;background:#f0f0f0;border-right:2px solid #6e6e6e;border-bottom:2px solid #6e6e6e;font-weight:bold;font-size:13px;text-align:center;line-height:23px">a</div>
<div class="ab" style="left:278px;top:443px;width:70px;height:25px;background:#dcdcdc;border-bottom:1px solid #c4c4c4;border-right:1px solid #c4c4c4"></div>
<div class="ab" style="left:216px;top:468px;width:62px;height:25px;background:#f0f0f0;border-right:2px solid #6e6e6e;border-bottom:2px solid #6e6e6e;font-weight:bold;font-size:13px;text-align:center;line-height:23px">b</div>
<div class="ab" style="left:278px;top:468px;width:70px;height:25px;background:#dcdcdc;border-bottom:1px solid #c4c4c4;border-right:1px solid #c4c4c4"></div>
<div class="ab" style="left:216px;top:493px;width:62px;height:25px;background:#f0f0f0;border-right:2px solid #6e6e6e;border-bottom:2px solid #6e6e6e;font-weight:bold;font-size:13px;text-align:center;line-height:23px">L</div>
<div class="ab" style="left:278px;top:493px;width:70px;height:25px;background:#fff;border-bottom:1px solid #c4c4c4;border-right:1px solid #c4c4c4"></div>
<div class="ab" style="left:216px;top:518px;width:62px;height:25px;background:#f0f0f0;border-right:2px solid #6e6e6e;border-bottom:2px solid #6e6e6e;font-weight:bold;font-size:13px;text-align:center;line-height:23px">C</div>
<div class="ab" style="left:278px;top:518px;width:70px;height:25px;background:#fff;border-bottom:1px solid #c4c4c4;border-right:1px solid #c4c4c4"></div>
<div class="ab" style="left:216px;top:543px;width:62px;height:25px;background:#f0f0f0;border-right:2px solid #6e6e6e;border-bottom:2px solid #6e6e6e;font-weight:bold;font-size:13px;text-align:center;line-height:23px">H</div>
<div class="ab" style="left:278px;top:543px;width:70px;height:25px;background:#fff;border-bottom:1px solid #c4c4c4;border-right:1px solid #c4c4c4"></div>
<div class="ab" style="left:216px;top:568px;width:62px;height:25px;background:#f0f0f0;border-right:2px solid #6e6e6e;border-bottom:2px solid #6e6e6e;font-weight:bold;font-size:13px;text-align:center;line-height:23px">L</div>
<div class="ab" style="left:278px;top:568px;width:70px;height:25px;background:#dcdcdc;border-bottom:1px solid #c4c4c4;border-right:1px solid #c4c4c4"></div>
<div class="ab" style="left:216px;top:593px;width:62px;height:25px;background:#f0f0f0;border-right:2px solid #6e6e6e;border-bottom:2px solid #6e6e6e;font-weight:bold;font-size:13px;text-align:center;line-height:23px">M</div>
<div class="ab" style="left:278px;top:593px;width:70px;height:25px;background:#dcdcdc;border-bottom:1px solid #c4c4c4;border-right:1px solid #c4c4c4"></div>
<div class="ab" style="left:216px;top:618px;width:62px;height:25px;background:#f0f0f0;border-right:2px solid #6e6e6e;border-bottom:2px solid #6e6e6e;font-weight:bold;font-size:13px;text-align:center;line-height:23px">S</div>
<div class="ab" style="left:278px;top:618px;width:70px;height:25px;background:#dcdcdc;border-bottom:1px solid #c4c4c4;border-right:1px solid #c4c4c4"></div>
<div class="ab" style="left:348px;top:43px;width:18px;height:800px;background:#f0f0f0"></div>
<div class="ab" style="left:349px;top:60px;width:15px;height:556px;background:#c8c8c8"></div>
</div>
<div class="pnl" style="left:390px;top:296px;width:2144px;height:853px;"><div class="ttl">Information</div>
<div class="ab" style="left:5px;top:20px;width:301px;height:22px;border:2px solid #6e6e6e;border-right-color:#e0e0e0;border-bottom-color:#e0e0e0;background:#fff"></div>
<div class="ab" style="left:8px;top:23px;width:279px;height:16px;background:#0078d7"></div>
<div class="t" style="left:9px;top:22px;font-size:14px;color:#fff">Target - CIE</div>
<div class="ab" style="left:287px;top:22px;width:17px;height:18px;background:#e8e8e8;border-right:2px solid #888;border-bottom:2px solid #888"></div>
<div class="ab" style="left:291px;top:29px;width:0;height:0;border-left:4px solid transparent;border-right:4px solid transparent;border-top:5px solid #000"></div>
<div class="ab" style="left:6px;top:50px;width:1068px;height:794px;border:1px solid #000;background:conic-gradient(from 0deg at 533.0px 396.0px,rgb(64,255,0) 0.0deg,rgb(68,254,0) 1.5deg,rgb(71,253,0) 3.0deg,rgb(75,251,0) 4.5deg,rgb(79,250,0) 6.0deg,rgb(83,249,0) 7.5deg,rgb(86,248,0) 9.0deg,rgb(90,247,0) 10.5deg,rgb(94,245,0) 12.0deg,rgb(98,244,0) 13.5deg,rgb(102,243,0) 15.0deg,rgb(106,242,0) 16.5deg,rgb(110,240,0) 18.0deg,rgb(114,239,0) 19.5deg,rgb(118,238,0) 21.0deg,rgb(123,236,0) 22.5deg,rgb(127,235,0) 24.0deg,rgb(132,233,0) 25.5deg,rgb(136,232,0) 27.0deg,rgb(141,230,0) 28.5deg,rgb(146,229,0) 30.0deg,rgb(151,227,0) 31.5deg,rgb(156,226,0) 33.0deg,rgb(162,224,0) 34.5deg,rgb(167,222,0) 36.0deg,rgb(173,220,0) 37.5deg,rgb(179,218,0) 39.0deg,rgb(185,216,0) 40.5deg,rgb(192,214,0) 42.0deg,rgb(199,212,0) 43.5deg,rgb(206,210,0) 45.0deg,rgb(214,207,0) 46.5deg,rgb(222,205,0) 48.0deg,rgb(230,202,0) 49.5deg,rgb(239,199,0) 51.0deg,rgb(249,196,0) 52.5deg,rgb(255,190,0) 54.0deg,rgb(255,179,0) 55.5deg,rgb(255,170,0) 57.0deg,rgb(255,160,0) 58.5deg,rgb(255,151,0) 60.0deg,rgb(255,142,0) 61.5deg,rgb(255,133,0) 63.0deg,rgb(255,125,0) 64.5deg,rgb(255,116,0) 66.0deg,rgb(255,108,0) 67.5deg,rgb(255,100,0) 69.0deg,rgb(255,92,0) 70.5deg,rgb(255,85,0) 72.0deg,rgb(255,77,0) 73.5deg,rgb(255,70,0) 75.0deg,rgb(255,63,0) 76.5deg,rgb(255,56,0) 78.0deg,rgb(255,48,0) 79.5deg,rgb(255,41,0) 81.0deg,rgb(255,34,0) 82.5deg,rgb(255,27,0) 84.0deg,rgb(255,21,0) 85.5deg,rgb(255,14,0) 87.0deg,rgb(255,7,0) 88.5deg,rgb(255,0,0) 90.0deg,rgb(255,0,5) 91.5deg,rgb(255,0,9) 93.0deg,rgb(255,0,14) 94.5deg,rgb(255,0,18) 96.0deg,rgb(255,0,23) 97.5deg,rgb(255,0,27) 99.0deg,rgb(255,0,32) 100.5deg,rgb(255,0,37) 102.0deg,rgb(255,0,41) 103.5deg,rgb(255,0,46) 105.0deg,rgb(255,0,51) 106.5deg,rgb(255,0,56) 108.0deg,rgb(255,0,61) 109.5deg,rgb(255,0,66) 111.0deg,rgb(255,0,71) 112.5deg,rgb(255,0,77) 114.0deg,rgb(255,0,82) 115.5deg,rgb(255,0,88) 117.0deg,rgb(255,0,94) 118.5deg,rgb(255,0,99) 120.0deg,rgb(255,0,106) 121.5deg,rgb(255,0,112) 123.0deg,rgb(255,0,118) 124.5deg,rgb(255,0,125) 126.0deg,rgb(251,0,130) 127.5deg,rgb(244,0,133) 129.0deg,rgb(238,0,136) 130.5deg,rgb(233,0,139) 132.0deg,rgb(227,0,142) 133.5deg,rgb(222,0,144) 135.0deg,rgb(217,0,147) 136.5deg,rgb(213,0,149) 138.0deg,rgb(208,0,151) 139.5deg,rgb(204,0,153) 141.0deg,rgb(200,0,155) 142.5deg,rgb(196,0,157) 144.0deg,rgb(193,0,159) 145.5deg,rgb(189,0,161) 147.0deg,rgb(186,0,163) 148.5deg,rgb(182,0,164) 150.0deg,rgb(179,0,166) 151.5deg,rgb(176,0,167) 153.0deg,rgb(173,0,169) 154.5deg,rgb(170,0,170) 156.0deg,rgb(167,0,172) 157.5deg,rgb(164,0,173) 159.0deg,rgb(161,0,175) 160.5deg,rgb(158,0,176) 162.0deg,rgb(156,0,178) 163.5deg,rgb(153,0,179) 165.0deg,rgb(150,0,180) 166.5deg,rgb(148,0,181) 168.0deg,rgb(145,0,183) 169.5deg,rgb(143,0,184) 171.0deg,rgb(140,0,185) 172.5deg,rgb(137,0,187) 174.0deg,rgb(135,0,188) 175.5deg,rgb(132,0,189) 177.0deg,rgb(130,0,190) 178.5deg,rgb(128,0,192) 180.0deg,rgb(125,0,193) 181.5deg,rgb(123,0,194) 183.0deg,rgb(120,0,195) 184.5deg,rgb(118,0,196) 186.0deg,rgb(115,0,198) 187.5deg,rgb(112,0,199) 189.0deg,rgb(110,0,200) 190.5deg,rgb(107,0,202) 192.0deg,rgb(105,0,203) 193.5deg,rgb(102,0,204) 195.0deg,rgb(99,0,205) 196.5deg,rgb(97,0,207) 198.0deg,rgb(94,0,208) 199.5deg,rgb(91,0,210) 201.0deg,rgb(88,0,211) 202.5deg,rgb(85,0,213) 204.0deg,rgb(82,0,214) 205.5deg,rgb(79,0,216) 207.0deg,rgb(76,0,217) 208.5deg,rgb(73,0,219) 210.0deg,rgb(69,0,220) 211.5deg,rgb(66,0,222) 213.0deg,rgb(62,0,224) 214.5deg,rgb(59,0,226) 216.0deg,rgb(55,0,228) 217.5deg,rgb(51,0,230) 219.0deg,rgb(47,0,232) 220.5deg,rgb(42,0,234) 222.0deg,rgb(38,0,236) 223.5deg,rgb(33,0,239) 225.0deg,rgb(28,0,241) 226.5deg,rgb(22,0,244) 228.0deg,rgb(17,0,247) 229.5deg,rgb(11,0,250) 231.0deg,rgb(4,0,253) 232.5deg,rgb(0,3,254) 234.0deg,rgb(0,10,250) 235.5deg,rgb(0,16,247) 237.0deg,rgb(0,22,243) 238.5deg,rgb(0,28,240) 240.0deg,rgb(0,34,237) 241.5deg,rgb(0,40,234) 243.0deg,rgb(0,46,231) 244.5deg,rgb(0,51,228) 246.0deg,rgb(0,56,225) 247.5deg,rgb(0,62,222) 249.0deg,rgb(0,67,220) 250.5deg,rgb(0,72,217) 252.0deg,rgb(0,77,214) 253.5deg,rgb(0,82,212) 255.0deg,rgb(0,86,209) 256.5deg,rgb(0,91,207) 258.0deg,rgb(0,96,204) 259.5deg,rgb(0,100,202) 261.0deg,rgb(0,105,199) 262.5deg,rgb(0,109,197) 264.0deg,rgb(0,114,195) 265.5deg,rgb(0,119,192) 267.0deg,rgb(0,123,190) 268.5deg,rgb(0,127,188) 270.0deg,rgb(0,132,185) 271.5deg,rgb(0,136,183) 273.0deg,rgb(0,141,180) 274.5deg,rgb(0,146,178) 276.0deg,rgb(0,150,176) 277.5deg,rgb(0,155,173) 279.0deg,rgb(0,159,171) 280.5deg,rgb(0,164,168) 282.0deg,rgb(0,169,166) 283.5deg,rgb(0,173,163) 285.0deg,rgb(0,178,161) 286.5deg,rgb(0,183,158) 288.0deg,rgb(0,188,155) 289.5deg,rgb(0,193,153) 291.0deg,rgb(0,199,150) 292.5deg,rgb(0,204,147) 294.0deg,rgb(0,209,144) 295.5deg,rgb(0,215,141) 297.0deg,rgb(0,221,138) 298.5deg,rgb(0,227,135) 300.0deg,rgb(0,233,132) 301.5deg,rgb(0,239,128) 303.0deg,rgb(0,245,125) 304.5deg,rgb(0,252,121) 306.0deg,rgb(2,255,116) 307.5deg,rgb(5,255,110) 309.0deg,rgb(8,255,104) 310.5deg,rgb(11,255,99) 312.0deg,rgb(14,255,94) 313.5deg,rgb(16,255,89) 315.0deg,rgb(19,255,85) 316.5deg,rgb(21,255,80) 318.0deg,rgb(23,255,76) 319.5deg,rgb(25,255,72) 321.0deg,rgb(28,255,68) 322.5deg,rgb(29,255,65) 324.0deg,rgb(31,255,61) 325.5deg,rgb(33,255,58) 327.0deg,rgb(35,255,55) 328.5deg,rgb(37,255,51) 330.0deg,rgb(38,255,48) 331.5deg,rgb(40,255,45) 333.0deg,rgb(41,255,43) 334.5deg,rgb(43,255,40) 336.0deg,rgb(44,255,37) 337.5deg,rgb(46,255,34) 339.0deg,rgb(47,255,32) 340.5deg,rgb(49,255,29) 342.0deg,rgb(50,255,26) 343.5deg,rgb(51,255,24) 345.0deg,rgb(53,255,21) 346.5deg,rgb(54,255,19) 348.0deg,rgb(55,255,17) 349.5deg,rgb(56,255,14) 351.0deg,rgb(58,255,12) 352.5deg,rgb(59,255,9) 354.0deg,rgb(60,255,7) 355.5deg,rgb(62,255,5) 357.0deg,rgb(63,255,2) 358.5deg,rgb(64,255,0) 360.0deg)"></div>
<div class="ab" style="left:166px;top:169px;width:748px;height:555px;background:#050000;border:1px solid #fff;border-radius:11px"></div>
<svg class="ab" style="left:6px;top:50px" width="1068" height="794"><g stroke="#fff" stroke-width="1" fill="none" stroke-dasharray="3,2" shape-rendering="crispEdges"><line x1="111" y1="397.5" x2="960" y2="397.5"/><line x1="534.5" y1="82" x2="534.5" y2="712"/><ellipse cx="534.5" cy="397" rx="211.5" ry="157.4"/></g></svg>
<div class="ab" style="left:1075px;top:51px;width:1066px;height:791px;border:2px solid #8c8c8c;border-right-color:#fff;border-bottom-color:#fff;background:#02080b"></div>
<div class="ab" style="left:1078px;top:54px;width:1060px;height:786px;clip-path:polygon(275.2px 734.3px,269.9px 731.6px,264.7px 728.6px,259.9px 725.2px,255.5px 721.2px,251.3px 716.9px,247.3px 712.4px,243.5px 707.8px,239.9px 703.0px,236.3px 698.2px,232.8px 693.3px,229.4px 688.4px,226.1px 683.4px,222.9px 678.3px,219.6px 673.3px,216.3px 668.2px,213.1px 663.2px,210.0px 658.1px,206.8px 653.0px,203.7px 647.9px,200.6px 642.7px,197.5px 637.6px,194.5px 632.4px,191.6px 627.1px,188.8px 621.8px,186.0px 616.5px,183.2px 611.2px,180.6px 605.8px,178.1px 600.4px,175.6px 594.9px,173.2px 589.4px,170.9px 583.9px,168.7px 578.3px,166.4px 572.7px,164.2px 567.2px,161.9px 561.6px,159.6px 556.1px,157.2px 550.6px,154.9px 545.1px,152.5px 539.5px,150.2px 534.0px,147.9px 528.5px,145.7px 522.9px,143.5px 517.3px,141.3px 511.7px,139.1px 506.1px,136.9px 500.6px,134.7px 495.0px,132.6px 489.3px,130.7px 483.7px,128.9px 477.9px,127.1px 472.2px,125.3px 466.5px,123.5px 460.8px,121.8px 455.0px,120.1px 449.3px,118.4px 443.5px,116.8px 437.7px,115.3px 431.9px,113.8px 426.1px,112.3px 420.3px,110.8px 414.5px,109.2px 408.7px,107.7px 402.9px,106.3px 397.1px,104.9px 391.2px,103.8px 385.3px,102.7px 379.4px,101.8px 373.5px,100.8px 367.6px,99.8px 361.7px,98.9px 355.8px,98.1px 349.8px,97.4px 343.8px,96.8px 337.9px,96.2px 331.9px,95.6px 325.9px,95.0px 320.0px,94.5px 314.0px,94.1px 308.0px,93.8px 302.0px,93.5px 296.0px,93.2px 290.0px,92.9px 284.0px,92.7px 278.0px,92.6px 272.0px,92.5px 266.0px,92.5px 260.0px,92.5px 254.0px,92.5px 248.0px,92.6px 242.0px,92.8px 236.0px,92.9px 230.1px,93.1px 224.1px,93.4px 218.1px,93.8px 212.1px,94.2px 206.1px,94.6px 200.1px,95.0px 194.1px,95.6px 188.1px,96.2px 182.2px,96.9px 176.2px,98.0px 170.3px,99.1px 164.5px,100.4px 158.6px,101.8px 152.8px,103.4px 147.0px,105.4px 141.4px,107.8px 135.9px,110.5px 130.6px,113.5px 125.4px,116.8px 120.4px,120.5px 115.8px,124.7px 111.5px,129.2px 107.5px,133.9px 103.9px,139.0px 100.8px,144.2px 97.9px,149.6px 95.3px,155.1px 93.0px,160.8px 91.0px,166.5px 89.3px,172.3px 88.0px,178.2px 87.0px,184.2px 86.3px,190.1px 86.0px,196.1px 85.9px,202.1px 86.0px,208.1px 86.5px,214.0px 87.3px,219.9px 88.3px,225.8px 89.6px,231.5px 91.1px,237.3px 92.9px,243.0px 94.8px,248.6px 96.8px,254.3px 98.8px,259.9px 100.9px,265.5px 103.1px,271.1px 105.3px,276.6px 107.5px,282.2px 109.8px,287.8px 112.0px,293.3px 114.4px,298.8px 116.8px,304.2px 119.4px,309.5px 122.2px,314.7px 125.0px,320.0px 127.9px,325.4px 130.6px,330.7px 133.4px,336.1px 136.0px,341.4px 138.7px,346.8px 141.4px,352.2px 144.1px,357.5px 146.8px,362.9px 149.5px,368.3px 152.2px,373.6px 154.9px,378.8px 157.9px,383.9px 161.0px,389.1px 164.1px,394.2px 167.2px,399.3px 170.4px,404.4px 173.5px,409.5px 176.7px,414.6px 179.8px,419.7px 183.0px,424.8px 186.1px,429.9px 189.3px,435.0px 192.4px,440.0px 195.5px,440.8px 196.0px,810.0px 441.4px,910.9px 508.8px,940.0px 528.9px,810.0px 567.1px,330.0px 719.0px,292.4px 730.5px);background:conic-gradient(from 0deg at 456.5px 488.0px,rgb(60,200,0) 0deg,rgb(78,200,0) 3deg,rgb(92,200,0) 6deg,rgb(103,200,0) 9deg,rgb(114,200,0) 12deg,rgb(123,200,0) 15deg,rgb(133,200,0) 18deg,rgb(141,200,0) 21deg,rgb(150,200,0) 24deg,rgb(158,200,0) 27deg,rgb(166,200,0) 30deg,rgb(174,200,0) 33deg,rgb(182,200,0) 36deg,rgb(191,200,0) 39deg,rgb(200,200,0) 42deg,rgb(200,192,0) 45deg,rgb(200,183,0) 48deg,rgb(200,175,0) 51deg,rgb(200,167,0) 54deg,rgb(200,159,0) 57deg,rgb(200,151,0) 60deg,rgb(200,143,0) 63deg,rgb(200,135,0) 66deg,rgb(200,126,0) 69deg,rgb(200,117,0) 72deg,rgb(200,107,0) 75deg,rgb(200,97,0) 78deg,rgb(200,85,0) 81deg,rgb(200,70,0) 84deg,rgb(200,51,0) 87deg,rgb(200,0,11) 90deg,rgb(200,0,52) 93deg,rgb(200,0,69) 96deg,rgb(200,0,81) 99deg,rgb(200,0,91) 102deg,rgb(200,0,99) 105deg,rgb(200,0,106) 108deg,rgb(200,0,112) 111deg,rgb(200,0,118) 114deg,rgb(200,0,123) 117deg,rgb(200,0,127) 120deg,rgb(200,0,132) 123deg,rgb(200,0,136) 126deg,rgb(200,0,140) 129deg,rgb(200,0,144) 132deg,rgb(200,0,148) 135deg,rgb(200,0,151) 138deg,rgb(200,0,155) 141deg,rgb(200,0,158) 144deg,rgb(200,0,162) 147deg,rgb(200,0,165) 150deg,rgb(200,0,169) 153deg,rgb(200,0,173) 156deg,rgb(200,0,176) 159deg,rgb(200,0,180) 162deg,rgb(200,0,184) 165deg,rgb(200,0,188) 168deg,rgb(200,0,192) 171deg,rgb(200,0,197) 174deg,rgb(198,0,200) 177deg,rgb(193,0,200) 180deg,rgb(188,0,200) 183deg,rgb(183,0,200) 186deg,rgb(177,0,200) 189deg,rgb(171,0,200) 192deg,rgb(165,0,200) 195deg,rgb(158,0,200) 198deg,rgb(150,0,200) 201deg,rgb(142,0,200) 204deg,rgb(133,0,200) 207deg,rgb(122,0,200) 210deg,rgb(109,0,200) 213deg,rgb(92,0,200) 216deg,rgb(69,0,200) 219deg,rgb(15,0,200) 222deg,rgb(0,67,200) 225deg,rgb(0,91,200) 228deg,rgb(0,107,200) 231deg,rgb(0,120,200) 234deg,rgb(0,131,200) 237deg,rgb(0,141,200) 240deg,rgb(0,149,200) 243deg,rgb(0,156,200) 246deg,rgb(0,163,200) 249deg,rgb(0,169,200) 252deg,rgb(0,175,200) 255deg,rgb(0,180,200) 258deg,rgb(0,186,200) 261deg,rgb(0,191,200) 264deg,rgb(0,195,200) 267deg,rgb(0,200,200) 270deg,rgb(0,200,195) 273deg,rgb(0,200,191) 276deg,rgb(0,200,187) 279deg,rgb(0,200,183) 282deg,rgb(0,200,180) 285deg,rgb(0,200,176) 288deg,rgb(0,200,172) 291deg,rgb(0,200,169) 294deg,rgb(0,200,165) 297deg,rgb(0,200,162) 300deg,rgb(0,200,159) 303deg,rgb(0,200,155) 306deg,rgb(0,200,152) 309deg,rgb(0,200,148) 312deg,rgb(0,200,144) 315deg,rgb(0,200,140) 318deg,rgb(0,200,136) 321deg,rgb(0,200,132) 324deg,rgb(0,200,128) 327deg,rgb(0,200,123) 330deg,rgb(0,200,118) 333deg,rgb(0,200,112) 336deg,rgb(0,200,105) 339deg,rgb(0,200,98) 342deg,rgb(0,200,89) 345deg,rgb(0,200,78) 348deg,rgb(0,200,65) 351deg,rgb(0,200,44) 354deg,rgb(32,200,0) 357deg,rgb(60,200,0) 360deg)"></div><div class="ab" style="left:1078px;top:54px;width:1060px;height:786px;clip-path:polygon(441.0px 278.0px,585.5px 338.3px,841.0px 488.0px,457.0px 635.0px,266.0px 699.0px,352.0px 488.5px);background:radial-gradient(ellipse 260px 200px at 456.5px 488px,rgba(255,255,255,1) 0%,rgba(255,255,255,0.75) 25%,rgba(255,255,255,0.25) 60%,rgba(255,255,255,0) 100%),conic-gradient(from 0deg at 456.5px 488.0px,rgb(77,255,0) 0deg,rgb(99,255,0) 3deg,rgb(117,255,0) 6deg,rgb(132,255,0) 9deg,rgb(145,255,0) 12deg,rgb(157,255,0) 15deg,rgb(169,255,0) 18deg,rgb(180,255,0) 21deg,rgb(191,255,0) 24deg,rgb(201,255,0) 27deg,rgb(212,255,0) 30deg,rgb(222,255,0) 33deg,rgb(233,255,0) 36deg,rgb(243,255,0) 39deg,rgb(254,255,0) 42deg,rgb(255,244,0) 45deg,rgb(255,234,0) 48deg,rgb(255,223,0) 51deg,rgb(255,213,0) 54deg,rgb(255,203,0) 57deg,rgb(255,193,0) 60deg,rgb(255,182,0) 63deg,rgb(255,172,0) 66deg,rgb(255,161,0) 69deg,rgb(255,149,0) 72deg,rgb(255,137,0) 75deg,rgb(255,123,0) 78deg,rgb(255,108,0) 81deg,rgb(255,90,0) 84deg,rgb(255,65,0) 87deg,rgb(255,0,15) 90deg,rgb(255,0,66) 93deg,rgb(255,0,88) 96deg,rgb(255,0,103) 99deg,rgb(255,0,116) 102deg,rgb(255,0,126) 105deg,rgb(255,0,135) 108deg,rgb(255,0,143) 111deg,rgb(255,0,150) 114deg,rgb(255,0,156) 117deg,rgb(255,0,162) 120deg,rgb(255,0,168) 123deg,rgb(255,0,173) 126deg,rgb(255,0,179) 129deg,rgb(255,0,183) 132deg,rgb(255,0,188) 135deg,rgb(255,0,193) 138deg,rgb(255,0,197) 141deg,rgb(255,0,202) 144deg,rgb(255,0,206) 147deg,rgb(255,0,211) 150deg,rgb(255,0,215) 153deg,rgb(255,0,220) 156deg,rgb(255,0,225) 159deg,rgb(255,0,230) 162deg,rgb(255,0,235) 165deg,rgb(255,0,240) 168deg,rgb(255,0,245) 171deg,rgb(255,0,251) 174deg,rgb(253,0,255) 177deg,rgb(246,0,255) 180deg,rgb(240,0,255) 183deg,rgb(233,0,255) 186deg,rgb(226,0,255) 189deg,rgb(218,0,255) 192deg,rgb(210,0,255) 195deg,rgb(201,0,255) 198deg,rgb(192,0,255) 201deg,rgb(181,0,255) 204deg,rgb(169,0,255) 207deg,rgb(155,0,255) 210deg,rgb(139,0,255) 213deg,rgb(118,0,255) 216deg,rgb(88,0,255) 219deg,rgb(19,0,255) 222deg,rgb(0,85,255) 225deg,rgb(0,116,255) 228deg,rgb(0,137,255) 231deg,rgb(0,153,255) 234deg,rgb(0,167,255) 237deg,rgb(0,179,255) 240deg,rgb(0,190,255) 243deg,rgb(0,199,255) 246deg,rgb(0,208,255) 249deg,rgb(0,216,255) 252deg,rgb(0,223,255) 255deg,rgb(0,230,255) 258deg,rgb(0,237,255) 261deg,rgb(0,243,255) 264deg,rgb(0,249,255) 267deg,rgb(0,255,255) 270deg,rgb(0,255,249) 273deg,rgb(0,255,244) 276deg,rgb(0,255,239) 279deg,rgb(0,255,234) 282deg,rgb(0,255,229) 285deg,rgb(0,255,224) 288deg,rgb(0,255,220) 291deg,rgb(0,255,215) 294deg,rgb(0,255,211) 297deg,rgb(0,255,207) 300deg,rgb(0,255,202) 303deg,rgb(0,255,198) 306deg,rgb(0,255,193) 309deg,rgb(0,255,189) 312deg,rgb(0,255,184) 315deg,rgb(0,255,179) 318deg,rgb(0,255,174) 321deg,rgb(0,255,168) 324deg,rgb(0,255,163) 327deg,rgb(0,255,157) 330deg,rgb(0,255,150) 333deg,rgb(0,255,142) 336deg,rgb(0,255,134) 339deg,rgb(0,255,125) 342deg,rgb(0,255,114) 345deg,rgb(0,255,100) 348deg,rgb(0,255,82) 351deg,rgb(0,255,56) 354deg,rgb(41,255,0) 357deg,rgb(77,255,0) 360deg)"></div>
<canvas id="cie" class="ab" style="left:1078px;top:54px" width="1060" height="786"></canvas>
</div>
<script>
(function(){
var cv=document.getElementById('cie'); if(!cv) return;
var W=cv.width,H=cv.height,ctx=cv.getContext('2d');
var OX=1470,OY=352,X0=1558.9,SX=1176.7,Y0=1099.3,SY=787.0;
var P=[[275.2, 734.3], [269.9, 731.6], [264.7, 728.6], [259.9, 725.2], [255.5, 721.2], [251.3, 716.9], [247.3, 712.4], [243.5, 707.8], [239.9, 703.0], [236.3, 698.2], [232.8, 693.3], [229.4, 688.4], [226.1, 683.4], [222.9, 678.3], [219.6, 673.3], [216.3, 668.2], [213.1, 663.2], [210.0, 658.1], [206.8, 653.0], [203.7, 647.9], [200.6, 642.7], [197.5, 637.6], [194.5, 632.4], [191.6, 627.1], [188.8, 621.8], [186.0, 616.5], [183.2, 611.2], [180.6, 605.8], [178.1, 600.4], [175.6, 594.9], [173.2, 589.4], [170.9, 583.9], [168.7, 578.3], [166.4, 572.7], [164.2, 567.2], [161.9, 561.6], [159.6, 556.1], [157.2, 550.6], [154.9, 545.1], [152.5, 539.5], [150.2, 534.0], [147.9, 528.5], [145.7, 522.9], [143.5, 517.3], [141.3, 511.7], [139.1, 506.1], [136.9, 500.6], [134.7, 495.0], [132.6, 489.3], [130.7, 483.7], [128.9, 477.9], [127.1, 472.2], [125.3, 466.5], [123.5, 460.8], [121.8, 455.0], [120.1, 449.3], [118.4, 443.5], [116.8, 437.7], [115.3, 431.9], [113.8, 426.1], [112.3, 420.3], [110.8, 414.5], [109.2, 408.7], [107.7, 402.9], [106.3, 397.1], [104.9, 391.2], [103.8, 385.3], [102.7, 379.4], [101.8, 373.5], [100.8, 367.6], [99.8, 361.7], [98.9, 355.8], [98.1, 349.8], [97.4, 343.8], [96.8, 337.9], [96.2, 331.9], [95.6, 325.9], [95.0, 320.0], [94.5, 314.0], [94.1, 308.0], [93.8, 302.0], [93.5, 296.0], [93.2, 290.0], [92.9, 284.0], [92.7, 278.0], [92.6, 272.0], [92.5, 266.0], [92.5, 260.0], [92.5, 254.0], [92.5, 248.0], [92.6, 242.0], [92.8, 236.0], [92.9, 230.1], [93.1, 224.1], [93.4, 218.1], [93.8, 212.1], [94.2, 206.1], [94.6, 200.1], [95.0, 194.1], [95.6, 188.1], [96.2, 182.2], [96.9, 176.2], [98.0, 170.3], [99.1, 164.5], [100.4, 158.6], [101.8, 152.8], [103.4, 147.0], [105.4, 141.4], [107.8, 135.9], [110.5, 130.6], [113.5, 125.4], [116.8, 120.4], [120.5, 115.8], [124.7, 111.5], [129.2, 107.5], [133.9, 103.9], [139.0, 100.8], [144.2, 97.9], [149.6, 95.3], [155.1, 93.0], [160.8, 91.0], [166.5, 89.3], [172.3, 88.0], [178.2, 87.0], [184.2, 86.3], [190.1, 86.0], [196.1, 85.9], [202.1, 86.0], [208.1, 86.5], [214.0, 87.3], [219.9, 88.3], [225.8, 89.6], [231.5, 91.1], [237.3, 92.9], [243.0, 94.8], [248.6, 96.8], [254.3, 98.8], [259.9, 100.9], [265.5, 103.1], [271.1, 105.3], [276.6, 107.5], [282.2, 109.8], [287.8, 112.0], [293.3, 114.4], [298.8, 116.8], [304.2, 119.4], [309.5, 122.2], [314.7, 125.0], [320.0, 127.9], [325.4, 130.6], [330.7, 133.4], [336.1, 136.0], [341.4, 138.7], [346.8, 141.4], [352.2, 144.1], [357.5, 146.8], [362.9, 149.5], [368.3, 152.2], [373.6, 154.9], [378.8, 157.9], [383.9, 161.0], [389.1, 164.1], [394.2, 167.2], [399.3, 170.4], [404.4, 173.5], [409.5, 176.7], [414.6, 179.8], [419.7, 183.0], [424.8, 186.1], [429.9, 189.3], [435.0, 192.4], [440.0, 195.5], [440.8, 196], [810, 441.4], [910.9, 508.8], [940, 528.9], [810, 567.1], [330, 719], [292.4, 730.5]];
var HEX=[[441, 278], [585.5, 338.29999999999995], [841, 488], [457, 635], [266, 699], [352, 488.5]];
function pathOf(c,arr){c.beginPath();c.moveTo(arr[0][0],arr[0][1]);for(var i=1;i<arr.length;i++)c.lineTo(arr[i][0],arr[i][1]);c.closePath();}
function mk(){var c=document.createElement('canvas');c.width=W;c.height=H;return c;}
// grid solid
function grid(c,style){c.strokeStyle=style;c.lineWidth=1;c.beginPath();
 for(var k=0;k<=7;k++){var x=Math.round(X0+k*SX/10-OX)+0.5;c.moveTo(x,0);c.lineTo(x,H);}
 for(var k=1;k<=9;k++){var y=Math.round(Y0-k*SY/10-OY)+0.5;c.moveTo(0,y);c.lineTo(W,y);}
 c.stroke();}
// per-pixel colours
var outC=mk(),inC=mk();
var oc=outC.getContext('2d'),ic=inC.getContext('2d');
var od=oc.createImageData(W,H),id=ic.createImageData(W,H);
var g=1/2.2;
for(var py=0;py<H;py++){
 var yy=(Y0-(py+OY+0.5))/SY; if(yy<0.002) continue;
 for(var px=0;px<W;px++){
  var xx=(px+OX+0.5-X0)/SX;
  var X=xx/yy,Z=(1-xx-yy)/yy;
  var R=3.2406*X-1.5372-0.4986*Z, G=-0.9689*X+1.8758+0.0415*Z, B=0.0557*X-0.2040+1.0570*Z;
  var i=(py*W+px)*4;
  var mx=Math.max(R,G,B); if(mx<=0) continue;
  var r=Math.max(R,0)/mx,gg=Math.max(G,0)/mx,b=Math.max(B,0)/mx;
  id.data[i]=255*Math.pow(r,g);id.data[i+1]=255*Math.pow(gg,g);id.data[i+2]=255*Math.pow(b,g);id.data[i+3]=255;
  var mn=Math.min(R,G,B); if(mn>0) mn=0;
  var R2=R-mn,G2=G-mn,B2=B-mn,m2=Math.max(R2,G2,B2);
  od.data[i]=200*Math.pow(R2/m2,g);od.data[i+1]=200*Math.pow(G2/m2,g);od.data[i+2]=200*Math.pow(B2/m2,g);od.data[i+3]=255;
 }
}
oc.putImageData(od,0,0); ic.putImageData(id,0,0);
// locus fill
ctx.save(); pathOf(ctx,P); ctx.clip(); ctx.drawImage(outC,0,0);
// glow
var gc=mk(),gx=gc.getContext('2d'); pathOf(gx,HEX); gx.clip(); gx.drawImage(inC,0,0);
ctx.drawImage(gc,0,0);
pathOf(ctx,HEX); ctx.clip();
ctx.save(); ctx.translate(1926-OX,840-OY); ctx.rotate(0.35); ctx.scale(1.3,1);
var rg=ctx.createRadialGradient(0,0,0,0,0,135);
rg.addColorStop(0,'rgba(255,255,255,0.55)'); rg.addColorStop(0.5,'rgba(255,255,255,0.25)'); rg.addColorStop(1,'rgba(255,255,255,0)');
ctx.fillStyle=rg; ctx.fillRect(-300,-300,600,600); ctx.restore();
ctx.restore();
})();
</script>
<svg class="ab" style="left:1470px;top:352px;overflow:hidden" width="1060" height="786"><defs><mask id="mOut"><rect x="0" y="0" width="1060" height="786" fill="#fff"/><polygon points="275.2,734.3 269.9,731.6 264.7,728.6 259.9,725.2 255.5,721.2 251.3,716.9 247.3,712.4 243.5,707.8 239.9,703.0 236.3,698.2 232.8,693.3 229.4,688.4 226.1,683.4 222.9,678.3 219.6,673.3 216.3,668.2 213.1,663.2 210.0,658.1 206.8,653.0 203.7,647.9 200.6,642.7 197.5,637.6 194.5,632.4 191.6,627.1 188.8,621.8 186.0,616.5 183.2,611.2 180.6,605.8 178.1,600.4 175.6,594.9 173.2,589.4 170.9,583.9 168.7,578.3 166.4,572.7 164.2,567.2 161.9,561.6 159.6,556.1 157.2,550.6 154.9,545.1 152.5,539.5 150.2,534.0 147.9,528.5 145.7,522.9 143.5,517.3 141.3,511.7 139.1,506.1 136.9,500.6 134.7,495.0 132.6,489.3 130.7,483.7 128.9,477.9 127.1,472.2 125.3,466.5 123.5,460.8 121.8,455.0 120.1,449.3 118.4,443.5 116.8,437.7 115.3,431.9 113.8,426.1 112.3,420.3 110.8,414.5 109.2,408.7 107.7,402.9 106.3,397.1 104.9,391.2 103.8,385.3 102.7,379.4 101.8,373.5 100.8,367.6 99.8,361.7 98.9,355.8 98.1,349.8 97.4,343.8 96.8,337.9 96.2,331.9 95.6,325.9 95.0,320.0 94.5,314.0 94.1,308.0 93.8,302.0 93.5,296.0 93.2,290.0 92.9,284.0 92.7,278.0 92.6,272.0 92.5,266.0 92.5,260.0 92.5,254.0 92.5,248.0 92.6,242.0 92.8,236.0 92.9,230.1 93.1,224.1 93.4,218.1 93.8,212.1 94.2,206.1 94.6,200.1 95.0,194.1 95.6,188.1 96.2,182.2 96.9,176.2 98.0,170.3 99.1,164.5 100.4,158.6 101.8,152.8 103.4,147.0 105.4,141.4 107.8,135.9 110.5,130.6 113.5,125.4 116.8,120.4 120.5,115.8 124.7,111.5 129.2,107.5 133.9,103.9 139.0,100.8 144.2,97.9 149.6,95.3 155.1,93.0 160.8,91.0 166.5,89.3 172.3,88.0 178.2,87.0 184.2,86.3 190.1,86.0 196.1,85.9 202.1,86.0 208.1,86.5 214.0,87.3 219.9,88.3 225.8,89.6 231.5,91.1 237.3,92.9 243.0,94.8 248.6,96.8 254.3,98.8 259.9,100.9 265.5,103.1 271.1,105.3 276.6,107.5 282.2,109.8 287.8,112.0 293.3,114.4 298.8,116.8 304.2,119.4 309.5,122.2 314.7,125.0 320.0,127.9 325.4,130.6 330.7,133.4 336.1,136.0 341.4,138.7 346.8,141.4 352.2,144.1 357.5,146.8 362.9,149.5 368.3,152.2 373.6,154.9 378.8,157.9 383.9,161.0 389.1,164.1 394.2,167.2 399.3,170.4 404.4,173.5 409.5,176.7 414.6,179.8 419.7,183.0 424.8,186.1 429.9,189.3 435.0,192.4 440.0,195.5 440.8,196.0 810.0,441.4 910.9,508.8 940.0,528.9 810.0,567.1 330.0,719.0 292.4,730.5" fill="#000"/></mask><mask id="mIn"><polygon points="275.2,734.3 269.9,731.6 264.7,728.6 259.9,725.2 255.5,721.2 251.3,716.9 247.3,712.4 243.5,707.8 239.9,703.0 236.3,698.2 232.8,693.3 229.4,688.4 226.1,683.4 222.9,678.3 219.6,673.3 216.3,668.2 213.1,663.2 210.0,658.1 206.8,653.0 203.7,647.9 200.6,642.7 197.5,637.6 194.5,632.4 191.6,627.1 188.8,621.8 186.0,616.5 183.2,611.2 180.6,605.8 178.1,600.4 175.6,594.9 173.2,589.4 170.9,583.9 168.7,578.3 166.4,572.7 164.2,567.2 161.9,561.6 159.6,556.1 157.2,550.6 154.9,545.1 152.5,539.5 150.2,534.0 147.9,528.5 145.7,522.9 143.5,517.3 141.3,511.7 139.1,506.1 136.9,500.6 134.7,495.0 132.6,489.3 130.7,483.7 128.9,477.9 127.1,472.2 125.3,466.5 123.5,460.8 121.8,455.0 120.1,449.3 118.4,443.5 116.8,437.7 115.3,431.9 113.8,426.1 112.3,420.3 110.8,414.5 109.2,408.7 107.7,402.9 106.3,397.1 104.9,391.2 103.8,385.3 102.7,379.4 101.8,373.5 100.8,367.6 99.8,361.7 98.9,355.8 98.1,349.8 97.4,343.8 96.8,337.9 96.2,331.9 95.6,325.9 95.0,320.0 94.5,314.0 94.1,308.0 93.8,302.0 93.5,296.0 93.2,290.0 92.9,284.0 92.7,278.0 92.6,272.0 92.5,266.0 92.5,260.0 92.5,254.0 92.5,248.0 92.6,242.0 92.8,236.0 92.9,230.1 93.1,224.1 93.4,218.1 93.8,212.1 94.2,206.1 94.6,200.1 95.0,194.1 95.6,188.1 96.2,182.2 96.9,176.2 98.0,170.3 99.1,164.5 100.4,158.6 101.8,152.8 103.4,147.0 105.4,141.4 107.8,135.9 110.5,130.6 113.5,125.4 116.8,120.4 120.5,115.8 124.7,111.5 129.2,107.5 133.9,103.9 139.0,100.8 144.2,97.9 149.6,95.3 155.1,93.0 160.8,91.0 166.5,89.3 172.3,88.0 178.2,87.0 184.2,86.3 190.1,86.0 196.1,85.9 202.1,86.0 208.1,86.5 214.0,87.3 219.9,88.3 225.8,89.6 231.5,91.1 237.3,92.9 243.0,94.8 248.6,96.8 254.3,98.8 259.9,100.9 265.5,103.1 271.1,105.3 276.6,107.5 282.2,109.8 287.8,112.0 293.3,114.4 298.8,116.8 304.2,119.4 309.5,122.2 314.7,125.0 320.0,127.9 325.4,130.6 330.7,133.4 336.1,136.0 341.4,138.7 346.8,141.4 352.2,144.1 357.5,146.8 362.9,149.5 368.3,152.2 373.6,154.9 378.8,157.9 383.9,161.0 389.1,164.1 394.2,167.2 399.3,170.4 404.4,173.5 409.5,176.7 414.6,179.8 419.7,183.0 424.8,186.1 429.9,189.3 435.0,192.4 440.0,195.5 440.8,196.0 810.0,441.4 910.9,508.8 940.0,528.9 810.0,567.1 330.0,719.0 292.4,730.5" fill="#fff"/><polygon points="441.0,278.0 585.5,338.3 841.0,488.0 457.0,635.0 266.0,699.0 352.0,488.5" fill="#000"/></mask></defs><g stroke="rgb(60,64,64)" stroke-width="1" mask="url(#mOut)"><line x1="88.5" y1="0" x2="88.5" y2="786"/><line x1="206.5" y1="0" x2="206.5" y2="786"/><line x1="324.5" y1="0" x2="324.5" y2="786"/><line x1="441.5" y1="0" x2="441.5" y2="786"/><line x1="559.5" y1="0" x2="559.5" y2="786"/><line x1="677.5" y1="0" x2="677.5" y2="786"/><line x1="794.5" y1="0" x2="794.5" y2="786"/><line x1="912.5" y1="0" x2="912.5" y2="786"/><line x1="0" y1="668.5" x2="1060" y2="668.5"/><line x1="0" y1="589.5" x2="1060" y2="589.5"/><line x1="0" y1="511.5" x2="1060" y2="511.5"/><line x1="0" y1="432.5" x2="1060" y2="432.5"/><line x1="0" y1="353.5" x2="1060" y2="353.5"/><line x1="0" y1="275.5" x2="1060" y2="275.5"/><line x1="0" y1="196.5" x2="1060" y2="196.5"/><line x1="0" y1="117.5" x2="1060" y2="117.5"/><line x1="0" y1="38.5" x2="1060" y2="38.5"/></g><g stroke="rgba(60,65,60,0.37)" stroke-width="1" mask="url(#mIn)"><line x1="88.5" y1="0" x2="88.5" y2="786"/><line x1="206.5" y1="0" x2="206.5" y2="786"/><line x1="324.5" y1="0" x2="324.5" y2="786"/><line x1="441.5" y1="0" x2="441.5" y2="786"/><line x1="559.5" y1="0" x2="559.5" y2="786"/><line x1="677.5" y1="0" x2="677.5" y2="786"/><line x1="794.5" y1="0" x2="794.5" y2="786"/><line x1="912.5" y1="0" x2="912.5" y2="786"/><line x1="0" y1="668.5" x2="1060" y2="668.5"/><line x1="0" y1="589.5" x2="1060" y2="589.5"/><line x1="0" y1="511.5" x2="1060" y2="511.5"/><line x1="0" y1="432.5" x2="1060" y2="432.5"/><line x1="0" y1="353.5" x2="1060" y2="353.5"/><line x1="0" y1="275.5" x2="1060" y2="275.5"/><line x1="0" y1="196.5" x2="1060" y2="196.5"/><line x1="0" y1="117.5" x2="1060" y2="117.5"/><line x1="0" y1="38.5" x2="1060" y2="38.5"/></g><polygon points="275.2,734.3 269.9,731.6 264.7,728.6 259.9,725.2 255.5,721.2 251.3,716.9 247.3,712.4 243.5,707.8 239.9,703.0 236.3,698.2 232.8,693.3 229.4,688.4 226.1,683.4 222.9,678.3 219.6,673.3 216.3,668.2 213.1,663.2 210.0,658.1 206.8,653.0 203.7,647.9 200.6,642.7 197.5,637.6 194.5,632.4 191.6,627.1 188.8,621.8 186.0,616.5 183.2,611.2 180.6,605.8 178.1,600.4 175.6,594.9 173.2,589.4 170.9,583.9 168.7,578.3 166.4,572.7 164.2,567.2 161.9,561.6 159.6,556.1 157.2,550.6 154.9,545.1 152.5,539.5 150.2,534.0 147.9,528.5 145.7,522.9 143.5,517.3 141.3,511.7 139.1,506.1 136.9,500.6 134.7,495.0 132.6,489.3 130.7,483.7 128.9,477.9 127.1,472.2 125.3,466.5 123.5,460.8 121.8,455.0 120.1,449.3 118.4,443.5 116.8,437.7 115.3,431.9 113.8,426.1 112.3,420.3 110.8,414.5 109.2,408.7 107.7,402.9 106.3,397.1 104.9,391.2 103.8,385.3 102.7,379.4 101.8,373.5 100.8,367.6 99.8,361.7 98.9,355.8 98.1,349.8 97.4,343.8 96.8,337.9 96.2,331.9 95.6,325.9 95.0,320.0 94.5,314.0 94.1,308.0 93.8,302.0 93.5,296.0 93.2,290.0 92.9,284.0 92.7,278.0 92.6,272.0 92.5,266.0 92.5,260.0 92.5,254.0 92.5,248.0 92.6,242.0 92.8,236.0 92.9,230.1 93.1,224.1 93.4,218.1 93.8,212.1 94.2,206.1 94.6,200.1 95.0,194.1 95.6,188.1 96.2,182.2 96.9,176.2 98.0,170.3 99.1,164.5 100.4,158.6 101.8,152.8 103.4,147.0 105.4,141.4 107.8,135.9 110.5,130.6 113.5,125.4 116.8,120.4 120.5,115.8 124.7,111.5 129.2,107.5 133.9,103.9 139.0,100.8 144.2,97.9 149.6,95.3 155.1,93.0 160.8,91.0 166.5,89.3 172.3,88.0 178.2,87.0 184.2,86.3 190.1,86.0 196.1,85.9 202.1,86.0 208.1,86.5 214.0,87.3 219.9,88.3 225.8,89.6 231.5,91.1 237.3,92.9 243.0,94.8 248.6,96.8 254.3,98.8 259.9,100.9 265.5,103.1 271.1,105.3 276.6,107.5 282.2,109.8 287.8,112.0 293.3,114.4 298.8,116.8 304.2,119.4 309.5,122.2 314.7,125.0 320.0,127.9 325.4,130.6 330.7,133.4 336.1,136.0 341.4,138.7 346.8,141.4 352.2,144.1 357.5,146.8 362.9,149.5 368.3,152.2 373.6,154.9 378.8,157.9 383.9,161.0 389.1,164.1 394.2,167.2 399.3,170.4 404.4,173.5 409.5,176.7 414.6,179.8 419.7,183.0 424.8,186.1 429.9,189.3 435.0,192.4 440.0,195.5 440.8,196.0 810.0,441.4 910.9,508.8 940.0,528.9 810.0,567.1 330.0,719.0 292.4,730.5" fill="none" stroke="rgb(240,160,40)" stroke-width="1.6" stroke-linejoin="round"/><filter id="bl" x="-50%" y="-50%" width="200%" height="200%"><feGaussianBlur stdDeviation="12"/></filter><ellipse cx="368" cy="458" rx="26" ry="95" transform="rotate(22.6 368 458)" fill="rgba(215,225,225,0.55)" filter="url(#bl)"/><polyline points="449.0,281.0 836.0,486.0" stroke="rgba(0,0,0,0.42)" stroke-width="3" fill="none"/><polyline points="275.0,694.0 835.0,487.0" stroke="rgba(40,0,60,0.45)" stroke-width="3.5" fill="none"/><polygon points="441.0,278.0 585.5,338.3 841.0,488.0 457.0,635.0 266.0,699.0 352.0,488.5" stroke="#fff" stroke-width="3" fill="none" stroke-linejoin="round"/><line x1="5" y1="488.5" x2="1052" y2="488.5" stroke="#e8e8e8" stroke-width="1" stroke-dasharray="4,3"/><line x1="456.5" y1="6" x2="456.5" y2="780" stroke="#e8e8e8" stroke-width="1" stroke-dasharray="4,3"/><line x1="456" y1="488" x2="442" y2="276" stroke="rgba(20,20,20,0.7)" stroke-width="1" stroke-dasharray="4,4"/><line x1="456" y1="488" x2="582" y2="348" stroke="rgba(20,20,20,0.7)" stroke-width="1" stroke-dasharray="4,4"/><line x1="456" y1="488" x2="265" y2="700" stroke="rgba(20,20,20,0.7)" stroke-width="1" stroke-dasharray="4,4"/><line x1="456" y1="488" x2="465" y2="626" stroke="rgba(20,20,20,0.7)" stroke-width="1" stroke-dasharray="4,4"/><line x1="456" y1="488" x2="842" y2="488" stroke="rgba(20,20,20,0.7)" stroke-width="1" stroke-dasharray="4,4"/><line x1="456" y1="488" x2="351" y2="488" stroke="rgba(20,20,20,0.7)" stroke-width="1" stroke-dasharray="4,4"/><rect x="441.5" y="350.20000000000005" width="13" height="13" fill="none" stroke="#c0a070" stroke-width="2.8"/><rect x="524.9000000000001" y="350.20000000000005" width="13" height="13" fill="none" stroke="#c0a070" stroke-width="2.8"/><rect x="608.8000000000002" y="365.70000000000005" width="13" height="13" fill="none" stroke="#c0a070" stroke-width="2.8"/><rect x="639.0999999999999" y="392.5" width="13" height="13" fill="none" stroke="#c0a070" stroke-width="2.8"/><rect x="483.29999999999995" y="400.9" width="13" height="13" fill="none" stroke="#c0a070" stroke-width="2.8"/><rect x="687.0" y="417.9" width="13" height="13" fill="none" stroke="#c0a070" stroke-width="2.8"/><rect x="389.5" y="457.29999999999995" width="13" height="13" fill="none" stroke="#c0a070" stroke-width="2.8"/><rect x="525.5999999999999" y="459.5" width="13" height="13" fill="none" stroke="#c0a070" stroke-width="2.8"/><rect x="559.5" y="453.1" width="13" height="13" fill="none" stroke="#c0a070" stroke-width="2.8"/><rect x="627.0999999999999" y="494.70000000000005" width="13" height="13" fill="none" stroke="#c0a070" stroke-width="2.8"/><rect x="725.8000000000002" y="489.0" width="13" height="13" fill="none" stroke="#c0a070" stroke-width="2.8"/><rect x="326.79999999999995" y="528.5" width="13" height="13" fill="none" stroke="#c0a070" stroke-width="2.8"/><rect x="374.70000000000005" y="531.3" width="13" height="13" fill="none" stroke="#c0a070" stroke-width="2.8"/><rect x="397.29999999999995" y="541.9" width="13" height="13" fill="none" stroke="#c0a070" stroke-width="2.8"/><rect x="420.5" y="568.7" width="13" height="13" fill="none" stroke="#c0a070" stroke-width="2.8"/><rect x="520.5999999999999" y="547.5" width="13" height="13" fill="none" stroke="#c0a070" stroke-width="2.8"/><rect x="334.5" y="591.3" width="13" height="13" fill="none" stroke="#c0a070" stroke-width="2.8"/><rect x="304.20000000000005" y="633.5" width="13" height="13" fill="none" stroke="#c0a070" stroke-width="2.8"/><rect x="438.9000000000001" y="322.0" width="13" height="13" fill="#78e848" stroke="#9a3a18" stroke-width="1.6"/><rect x="442.5" y="375.5" width="13" height="13" fill="#80f050" stroke="#9a3a18" stroke-width="1.6"/><rect x="445.20000000000005" y="427.70000000000005" width="13" height="13" fill="#90f070" stroke="#9a3a18" stroke-width="1.6"/><rect x="574.9000000000001" y="342.5" width="13" height="13" fill="#e8d040" stroke="#d84010" stroke-width="1.6"/><rect x="543.2" y="377.70000000000005" width="13" height="13" fill="#ffe850" stroke="#e05010" stroke-width="1.6"/><rect x="512.2" y="412.20000000000005" width="13" height="13" fill="#fff060" stroke="#e05010" stroke-width="1.6"/><rect x="481.20000000000005" y="447.5" width="13" height="13" fill="#fff8a0" stroke="#e05010" stroke-width="1.6"/><rect x="545.3" y="480.5" width="13" height="13" fill="#ffb0b8" stroke="#e00020" stroke-width="2.4"/><rect x="639.8000000000002" y="480.5" width="13" height="13" fill="#ff8090" stroke="#e00020" stroke-width="2.4"/><rect x="737.0999999999999" y="480.5" width="13" height="13" fill="#ff5060" stroke="#e00020" stroke-width="2.4"/><rect x="835.8000000000002" y="480.5" width="13" height="13" fill="#ff2030" stroke="#c00010" stroke-width="2.0"/><rect x="346.0" y="482.0" width="13" height="13" fill="#60eef8" stroke="#282858" stroke-width="1.3"/><rect x="372.0" y="482.0" width="13" height="13" fill="#80f2fa" stroke="#282858" stroke-width="1.3"/><rect x="399.0999999999999" y="482.0" width="13" height="13" fill="#a0f6fc" stroke="#282858" stroke-width="1.3"/><rect x="423.9000000000001" y="482.0" width="13" height="13" fill="#b8fafe" stroke="#282858" stroke-width="1.3"/><rect x="402.20000000000005" y="534.9" width="13" height="13" fill="#b0b0ff" stroke="#3010d0" stroke-width="2.2"/><rect x="353.5" y="586.3" width="13" height="13" fill="#8080ff" stroke="#3010d0" stroke-width="2.2"/><rect x="304.9000000000001" y="637.1" width="13" height="13" fill="#6060f0" stroke="#3010d0" stroke-width="2.2"/><rect x="257.0" y="693.5" width="13" height="13" fill="#4040e0" stroke="#6010a0" stroke-width="2.0"/><rect x="452.0" y="514.9" width="13" height="13" fill="#fff0ff" stroke="#e010d0" stroke-width="2.4"/><rect x="454.4000000000001" y="548.3" width="13" height="13" fill="#ffd8ff" stroke="#e010d0" stroke-width="2.4"/><rect x="456.5" y="583.5" width="13" height="13" fill="#ffb8ff" stroke="#e010d0" stroke-width="2.4"/><rect x="458.5999999999999" y="619.5" width="13" height="13" fill="#f080f0" stroke="#b000b0" stroke-width="2.0"/><rect x="450.20000000000005" y="482.1" width="13" height="13" fill="#f4f4f4" stroke="#b89868" stroke-width="2.6"/><circle cx="448" cy="264.5" r="5.8" fill="#d4d4f4" stroke="#3a3a3a" stroke-width="1.2"/><circle cx="442" cy="269.70000000000005" r="5.8" fill="#d4d4f4" stroke="#3a3a3a" stroke-width="1.2"/><circle cx="440.4000000000001" cy="274.9" r="5.8" fill="#d4d4f4" stroke="#3a3a3a" stroke-width="1.2"/><circle cx="585.6999999999998" cy="338.29999999999995" r="5.8" fill="#d4d4f4" stroke="#3a3a3a" stroke-width="1.2"/><circle cx="488" cy="474.29999999999995" r="5.8" fill="#f6f6f6" stroke="#3a3a3a" stroke-width="1.2"/><circle cx="451" cy="488" r="5.8" fill="#f6f6f6" stroke="#3a3a3a" stroke-width="1.2"/><path d="M381.0,555.0 C384.5,551.2 394.6,538.9 402.0,532.0 C409.4,525.1 416.3,520.6 425.4,513.4 C434.5,506.2 446.3,495.1 456.7,488.6 C467.1,482.1 474.3,481.4 488.0,474.3 C501.7,467.1 525.0,452.6 538.7,445.7 C552.4,438.8 559.0,436.7 570.0,433.0 C581.1,429.3 593.3,426.1 605.0,423.5 C616.7,420.9 634.2,418.5 640.0,417.5" stroke="#000" stroke-width="2" fill="none"/><circle cx="425.4000000000001" cy="513.4" r="2.8" fill="#fff" stroke="#222" stroke-width="1"/><circle cx="481.4000000000001" cy="475.6" r="2.8" fill="#fff" stroke="#222" stroke-width="1"/><circle cx="538.7" cy="445.70000000000005" r="2.8" fill="#fff" stroke="#222" stroke-width="1"/><circle cx="605" cy="423.5" r="2.8" fill="#fff" stroke="#222" stroke-width="1"/><circle cx="632" cy="419" r="2.8" fill="#fff" stroke="#222" stroke-width="1"/><circle cx="452.79999999999995" cy="497.70000000000005" r="3" fill="#20d020" stroke="#063" stroke-width="0.8"/><circle cx="497" cy="469" r="3" fill="#20d020" stroke="#063" stroke-width="0.8"/><circle cx="614.1999999999998" cy="424.79999999999995" r="3" fill="#20d020" stroke="#063" stroke-width="0.8"/><text x="394" y="508" font-family="'Liberation Sans',sans-serif" font-size="12" fill="#1a2430" text-anchor="start" font-weight="normal">9300</text><text x="452" y="469" font-family="'Liberation Sans',sans-serif" font-size="12" fill="#1a2430" text-anchor="start" font-weight="normal">5500</text><text x="508" y="440" font-family="'Liberation Sans',sans-serif" font-size="12" fill="#1a2430" text-anchor="start" font-weight="normal">4000</text><text x="579" y="419" font-family="'Liberation Sans',sans-serif" font-size="12" fill="#1a2430" text-anchor="start" font-weight="normal">3000</text><text x="621" y="413" font-family="'Liberation Sans',sans-serif" font-size="12" fill="#1a2430" text-anchor="start" font-weight="normal">2700</text><text x="612" y="442" font-family="'Liberation Sans',sans-serif" font-size="12" fill="#1a2430" text-anchor="start" font-weight="normal">A</text><text x="502" y="482" font-family="'Liberation Sans',sans-serif" font-size="12" fill="#1a2430" text-anchor="start" font-weight="normal">B</text><text x="456" y="514" font-family="'Liberation Sans',sans-serif" font-size="12" fill="#1a2430" text-anchor="start" font-weight="normal">C</text><text x="423" y="491" font-family="'Liberation Sans',sans-serif" font-size="12" fill="#1a2430" text-anchor="start" font-weight="normal">65</text><line x1="199" y1="85" x2="220" y2="56" stroke="#c8c8c8" stroke-width="1"/><text x="220" y="61" font-family="'Liberation Serif',serif" font-size="15.5" fill="#e4e4e4" text-anchor="start" font-weight="normal">520 nm</text><line x1="373" y1="157" x2="397" y2="128" stroke="#c8c8c8" stroke-width="1"/><text x="397" y="133" font-family="'Liberation Serif',serif" font-size="15.5" fill="#e4e4e4" text-anchor="start" font-weight="normal">540 nm</text><line x1="538" y1="260" x2="560" y2="231" stroke="#c8c8c8" stroke-width="1"/><text x="560" y="236" font-family="'Liberation Serif',serif" font-size="15.5" fill="#e4e4e4" text-anchor="start" font-weight="normal">560 nm</text><line x1="653" y1="335" x2="673" y2="307" stroke="#c8c8c8" stroke-width="1"/><text x="673" y="312" font-family="'Liberation Serif',serif" font-size="15.5" fill="#e4e4e4" text-anchor="start" font-weight="normal">580 nm</text><line x1="730" y1="388" x2="752" y2="359" stroke="#c8c8c8" stroke-width="1"/><text x="752" y="364" font-family="'Liberation Serif',serif" font-size="15.5" fill="#e4e4e4" text-anchor="start" font-weight="normal">600 nm</text><line x1="803" y1="438" x2="826" y2="409" stroke="#c8c8c8" stroke-width="1"/><text x="826" y="414" font-family="'Liberation Serif',serif" font-size="15.5" fill="#e4e4e4" text-anchor="start" font-weight="normal">620 nm</text><line x1="885" y1="489" x2="907" y2="460" stroke="#c8c8c8" stroke-width="1"/><text x="907" y="465" font-family="'Liberation Serif',serif" font-size="15.5" fill="#e4e4e4" text-anchor="start" font-weight="normal">640 nm</text><line x1="919" y1="514" x2="942" y2="483" stroke="#c8c8c8" stroke-width="1"/><text x="942" y="488" font-family="'Liberation Serif',serif" font-size="15.5" fill="#e4e4e4" text-anchor="start" font-weight="normal">660 nm</text><line x1="933" y1="523" x2="956" y2="494" stroke="#c8c8c8" stroke-width="1"/><text x="956" y="499" font-family="'Liberation Serif',serif" font-size="15.5" fill="#e4e4e4" text-anchor="start" font-weight="normal">680 nm</text><line x1="92" y1="278" x2="72" y2="285" stroke="#c8c8c8" stroke-width="1"/><text x="78" y="304" font-family="'Liberation Serif',serif" font-size="15.5" fill="#e4e4e4" text-anchor="end" font-weight="normal">500 nm</text><line x1="182" y1="608" x2="161" y2="616" stroke="#c8c8c8" stroke-width="1"/><text x="168" y="630" font-family="'Liberation Serif',serif" font-size="15.5" fill="#e4e4e4" text-anchor="end" font-weight="normal">480 nm</text><line x1="234" y1="696" x2="213" y2="704" stroke="#c8c8c8" stroke-width="1"/><text x="220" y="719" font-family="'Liberation Serif',serif" font-size="15.5" fill="#e4e4e4" text-anchor="end" font-weight="normal">460 nm</text><line x1="250" y1="718" x2="229" y2="725" stroke="#c8c8c8" stroke-width="1"/><text x="236" y="741" font-family="'Liberation Serif',serif" font-size="15.5" fill="#e4e4e4" text-anchor="end" font-weight="normal">440 nm</text><line x1="262" y1="728" x2="241" y2="734" stroke="#c8c8c8" stroke-width="1"/><text x="248" y="750" font-family="'Liberation Serif',serif" font-size="15.5" fill="#e4e4e4" text-anchor="end" font-weight="normal">420 nm</text><text x="3" y="663.5999999999999" font-family="'Liberation Serif',serif" font-size="13" fill="#e0e0e0" text-anchor="start" font-weight="normal">0.1</text><text x="209.57000000000016" y="782" font-family="'Liberation Serif',serif" font-size="13" fill="#e0e0e0" text-anchor="start" font-weight="normal">0.1</text><text x="3" y="584.9" font-family="'Liberation Serif',serif" font-size="13" fill="#e0e0e0" text-anchor="start" font-weight="normal">0.2</text><text x="327.24" y="782" font-family="'Liberation Serif',serif" font-size="13" fill="#e0e0e0" text-anchor="start" font-weight="normal">0.2</text><text x="3" y="506.19999999999993" font-family="'Liberation Serif',serif" font-size="13" fill="#e0e0e0" text-anchor="start" font-weight="normal">0.3</text><text x="444.9100000000001" y="782" font-family="'Liberation Serif',serif" font-size="13" fill="#e0e0e0" text-anchor="start" font-weight="normal">0.3</text><text x="3" y="427.5" font-family="'Liberation Serif',serif" font-size="13" fill="#e0e0e0" text-anchor="start" font-weight="normal">0.4</text><text x="562.5800000000002" y="782" font-family="'Liberation Serif',serif" font-size="13" fill="#e0e0e0" text-anchor="start" font-weight="normal">0.4</text><text x="3" y="348.79999999999995" font-family="'Liberation Serif',serif" font-size="13" fill="#e0e0e0" text-anchor="start" font-weight="normal">0.5</text><text x="680.25" y="782" font-family="'Liberation Serif',serif" font-size="13" fill="#e0e0e0" text-anchor="start" font-weight="normal">0.5</text><text x="3" y="270.0999999999999" font-family="'Liberation Serif',serif" font-size="13" fill="#e0e0e0" text-anchor="start" font-weight="normal">0.6</text><text x="797.9200000000001" y="782" font-family="'Liberation Serif',serif" font-size="13" fill="#e0e0e0" text-anchor="start" font-weight="normal">0.6</text><text x="3" y="191.39999999999998" font-family="'Liberation Serif',serif" font-size="13" fill="#e0e0e0" text-anchor="start" font-weight="normal">0.7</text><text x="915.5900000000001" y="782" font-family="'Liberation Serif',serif" font-size="13" fill="#e0e0e0" text-anchor="start" font-weight="normal">0.7</text><text x="3" y="112.69999999999993" font-family="'Liberation Serif',serif" font-size="13" fill="#e0e0e0" text-anchor="start" font-weight="normal">0.8</text><text x="896" y="725" font-family="'Liberation Sans',sans-serif" font-size="15" fill="#5a5a5a" text-anchor="start" font-weight="bold">hcfr.sourceforge.net</text></svg>
<svg class="ab" style="left:2220px;top:36px" width="34" height="30" viewBox="0 0 34 30">
<polygon points="7.8,7 22.7,5.2 23.4,24 9.1,27.3" fill="#1c4fa8"/>
<polygon points="7.8,7 22.7,5.2 22.2,8 8.8,9.8" fill="#3a78d8"/>
<polygon points="10.9,11.2 20.8,9.1 21.6,22.7 11.5,24.7" fill="#cde8fb"/>
<polyline points="13,16.9 15.1,20.3 19.3,11.7" fill="none" stroke="#c8b030" stroke-width="1.6"/>
<line x1="19" y1="18.6" x2="29" y2="14.8" stroke="#4a8ad8" stroke-width="2.6"/>
<circle cx="29.4" cy="14.6" r="2" fill="#b83828"/>
</svg>
<svg class="ab" style="left:2352px;top:40px" width="34" height="30" viewBox="0 0 34 30">
<polygon points="7.8,7 22.7,5.2 23.4,24 9.1,27.3" fill="#1c4fa8"/>
<polygon points="7.8,7 22.7,5.2 22.2,8 8.8,9.8" fill="#3a78d8"/>
<polygon points="10.9,11.2 20.8,9.1 21.6,22.7 11.5,24.7" fill="#cde8fb"/>
<polyline points="13,16.9 15.1,20.3 19.3,11.7" fill="none" stroke="#c8b030" stroke-width="1.6"/>
<line x1="19" y1="18.6" x2="29" y2="14.8" stroke="#4a8ad8" stroke-width="2.6"/>
<circle cx="29.4" cy="14.6" r="2" fill="#b83828"/>
</svg>
<div class="ab" style="left:2429px;top:86px;width:18px;height:4px;background:#eceef2"></div>
<div class="ab" style="left:2428px;top:88px;width:21px;height:2px;background:#58d858"></div>
<svg class="ab" style="left:2415px;top:93px" width="10" height="6"><polyline points="0,5 5.0,0 10,5" fill="none" stroke="#9a9a9a" stroke-width="2"/></svg>
<svg class="ab" style="left:2415px;top:251px" width="10" height="6"><polyline points="0,0 5.0,5 10,0" fill="none" stroke="#9a9a9a" stroke-width="2"/></svg>
<svg class="ab" style="left:358px;top:346px" width="10" height="6"><polyline points="0,5 5.0,0 10,5" fill="none" stroke="#606060" stroke-width="1.6"/></svg>
<svg class="ab" style="left:358px;top:1129px" width="10" height="6"><polyline points="0,0 5.0,5 10,0" fill="none" stroke="#606060" stroke-width="1.6"/></svg>
<svg class="ab" style="left:15px;top:267px" width="6" height="10"><polyline points="5,0 0,5 5,10" fill="none" stroke="#a8a8a8" stroke-width="2"/></svg>
<svg class="ab" style="left:2398px;top:267px" width="6" height="10"><polyline points="0,0 5,5 0,10" fill="none" stroke="#a8a8a8" stroke-width="2"/></svg>
<div class="ab" style="left:1947px;top:3px;width:1px;height:61px;background:#7a7a7a"></div>
<div class="ab" style="left:2px;top:1149px;width:2533px;height:1px;background:#fff"></div>
<div class="ab" style="left:2px;top:1150px;width:2533px;height:2px;background:#7c7c7c"></div>
<div class="ab" style="left:2534px;top:296px;width:1px;height:856px;background:#9a9a9a"></div>
</body></html>
